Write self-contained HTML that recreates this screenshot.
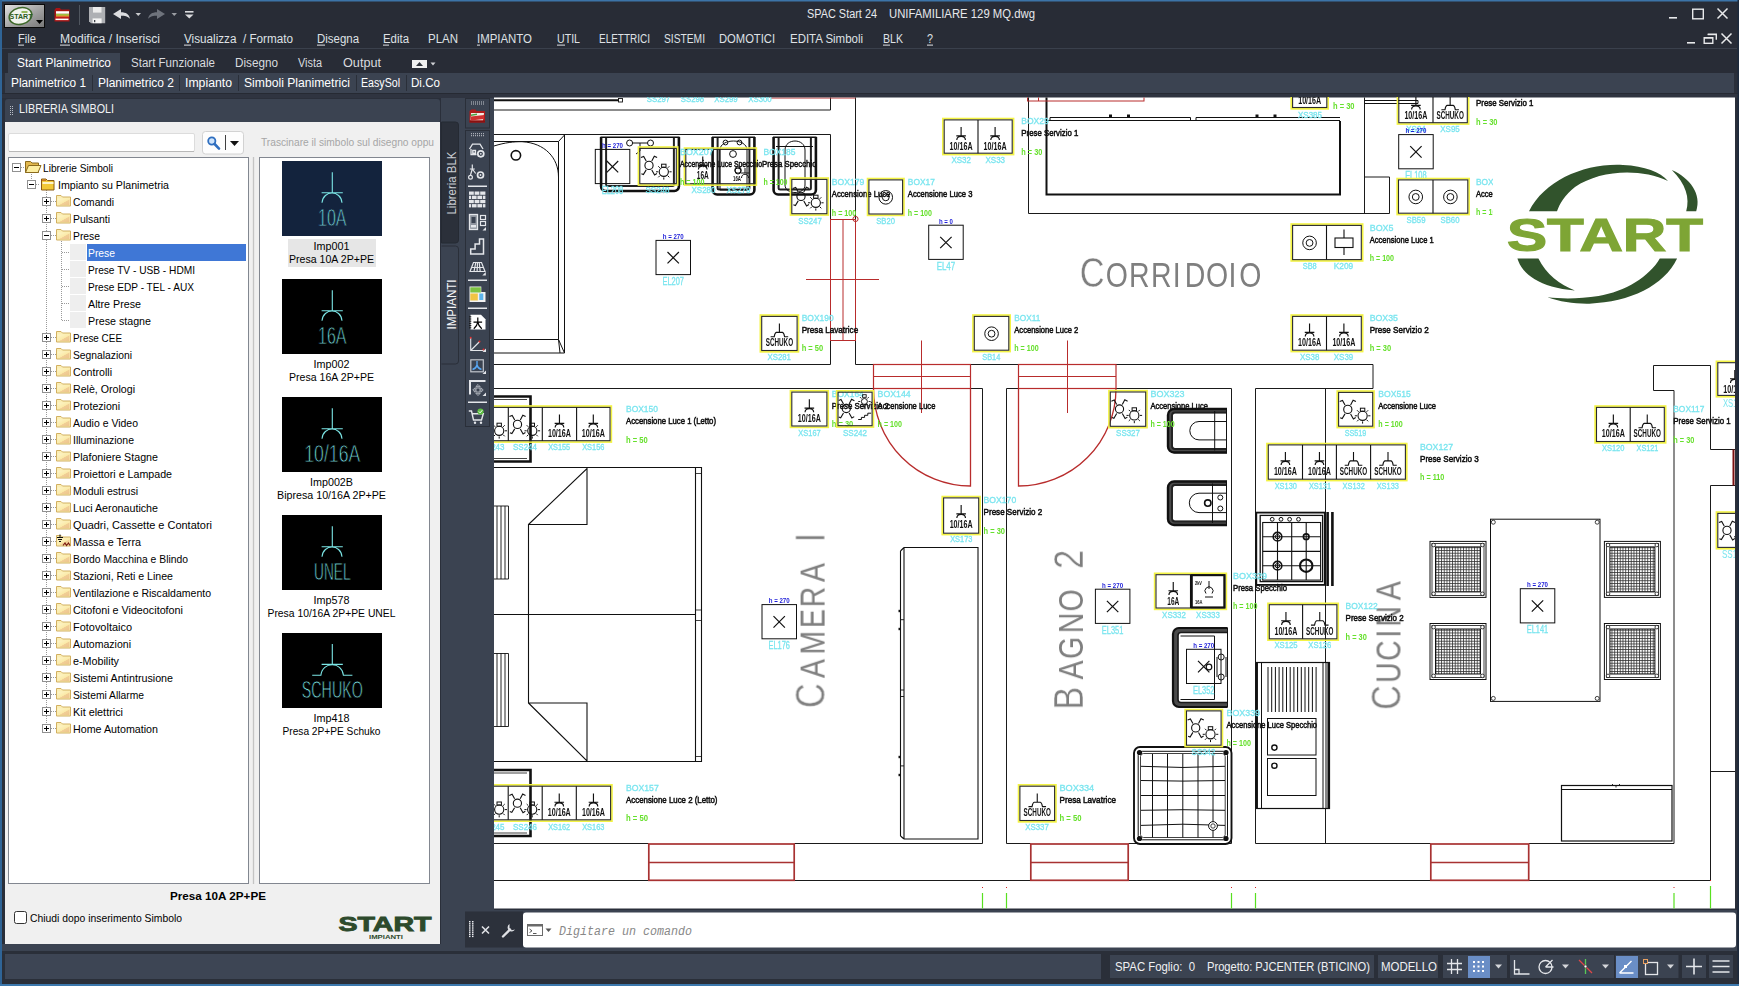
<!DOCTYPE html>
<html lang="it"><head><meta charset="utf-8"><title>SPAC Start 24 - UNIFAMILIARE 129 MQ.dwg</title>
<style>html,body{margin:0;padding:0;background:#222730;overflow:hidden}svg{display:block}text{white-space:pre}</style></head>
<body>
<svg font-family='"Liberation Sans", sans-serif' width="1739" height="986" viewBox="0 0 1739 986">
<rect x="0" y="0" width="1739" height="986" fill="#2a2f3a"/>
<rect x="0" y="0" width="1739" height="49" fill="#282c36"/>
<rect x="2" y="49" width="1736" height="24" fill="#282c36"/>
<line x1="2" y1="48.5" x2="1737" y2="48.5" stroke="#3a404c" stroke-width="1"/>
<rect x="8" y="53" width="112" height="20" fill="#3b4351"/>
<rect x="5" y="73" width="1729" height="20" fill="#3b4351"/>
<rect x="2" y="93" width="1736" height="1" fill="#262a33"/>
<rect x="2" y="94" width="1736" height="4" fill="#2f3440"/>
<rect x="0" y="0" width="1739" height="1.5" fill="#3c74a8"/>
<rect x="0" y="0" width="2" height="986" fill="#2f6496"/>
<rect x="1737.5" y="0" width="1.5" height="986" fill="#1d2a3c"/>
<rect x="0" y="984" width="1739" height="2" fill="#3c78ad"/>
<defs><linearGradient id="gApp" x1="0" y1="0" x2="1" y2="1"><stop offset="0" stop-color="#e2e2e2"/><stop offset="0.5" stop-color="#a8a8a8"/><stop offset="1" stop-color="#767676"/></linearGradient></defs>
<rect x="4.5" y="4.5" width="40" height="23" fill="url(#gApp)" stroke="#0a0a0a" stroke-width="1"/>
<ellipse cx="20.500" cy="16" rx="11.500" ry="8.200" fill="#f2f4ee" stroke="#3f6a2a" stroke-width="1.500" transform="rotate(-14 20.500 16)"/>
<g opacity="0.999"><text x="9.5" y="19.3" font-size="6.8" fill="#2c5a22" textLength="23" lengthAdjust="spacingAndGlyphs" font-weight="bold" font-family='"Liberation Sans", sans-serif'>START</text></g>
<rect x="21.5" y="11.2" width="6" height="1.6" fill="#7da838"/>
<path d="M36 20 h7 l-3.5 4z" fill="#000"/>
<path d="M54.500 10 l1.500 -2 h4 l1 1.500 h8.500 v12 h-15z" fill="#a81414"/>
<rect x="56" y="11.2" width="13" height="2.6" fill="#ffffff"/>
<rect x="56" y="13.8" width="13" height="2.2" fill="#9cc040"/>
<rect x="56" y="15.5" width="13" height="1.4" fill="#e88a30"/>
<rect x="55.5" y="16.8" width="13.5" height="2" fill="#c01c1c"/>
<rect x="55.5" y="18.6" width="13" height="1.5" fill="#ffffff"/>
<line x1="79.5" y1="5" x2="79.5" y2="25" stroke="#50565f" stroke-width="1"/>
<path d="M89 7 h16.200 v16.200 h-14.200 l-2 -2z" fill="#aeb0b4"/>
<rect x="93" y="7" width="8.5" height="5.6" fill="#ececec"/>
<rect x="92.6" y="18.4" width="9" height="4.8" fill="#f4f4f4"/>
<rect x="94" y="20" width="1.3" height="2.2" fill="#3a3e46"/>
<path d="M113 14 l8 -5 v3.2 c5 0 8 2 9 6.5 c-2.5 -2.5 -5 -3 -9 -3 v3.3z" fill="#dcdde0"/>
<path d="M135.5 13 h5.5 l-2.75 3z" fill="#c8cacd"/>
<path d="M165 14 l-8 -5 v3.2 c-5 0 -8 2 -9 6.5 c2.500 -2.5 5 -3 9 -3 v3.3z" fill="#6e737c"/>
<path d="M171.500 13 h5.5 l-2.75 3z" fill="#9a9da3"/>
<rect x="185" y="11" width="8.5" height="1.6" fill="#d8d9dc"/>
<path d="M185 14.5 h8.5 l-4.25 4z" fill="#d8d9dc"/>
<text x="807" y="18" font-size="12" fill="#e6e8ec" textLength="70" lengthAdjust="spacingAndGlyphs" font-family='"Liberation Sans", sans-serif'>SPAC Start 24</text>
<text x="889" y="18" font-size="12" fill="#e6e8ec" textLength="146" lengthAdjust="spacingAndGlyphs" font-family='"Liberation Sans", sans-serif'>UNIFAMILIARE 129 MQ.dwg</text>
<rect x="1669" y="17" width="8" height="1.6" fill="#e8e9eb"/>
<rect x="1692.7" y="9.2" width="10.6" height="9.6" fill="none" stroke="#e8e9eb" stroke-width="1.4"/>
<path d="M1717.500 8.5 l10 10 M1727.500 8.5 l-10 10" fill="none" stroke="#e8e9eb" stroke-width="1.5"/>
<rect x="1687" y="42" width="8" height="1.6" fill="#e8e9eb"/>
<path d="M1707.700 34.2 h8.6 v5.6" fill="none" stroke="#e8e9eb" stroke-width="1.4"/>
<rect x="1707.7" y="34" width="8.6" height="1.2" fill="#e8e9eb"/>
<rect x="1704.2" y="37.7" width="8.6" height="5.6" fill="#282c36" stroke="#e8e9eb" stroke-width="1.4"/>
<rect x="1704.2" y="37.4" width="8.6" height="1.2" fill="#e8e9eb"/>
<path d="M1721.500 33.5 l10 10 M1731.500 33.5 l-10 10" fill="none" stroke="#e8e9eb" stroke-width="1.5"/>
<text x="18" y="43" font-size="12" fill="#dfe1e5" textLength="18" lengthAdjust="spacingAndGlyphs" font-family='"Liberation Sans", sans-serif'>File</text>
<text x="60" y="43" font-size="12" fill="#dfe1e5" textLength="100" lengthAdjust="spacingAndGlyphs" font-family='"Liberation Sans", sans-serif'>Modifica / Inserisci</text>
<text x="184" y="43" font-size="12" fill="#dfe1e5" textLength="109" lengthAdjust="spacingAndGlyphs" font-family='"Liberation Sans", sans-serif'>Visualizza  / Formato</text>
<text x="317" y="43" font-size="12" fill="#dfe1e5" textLength="42" lengthAdjust="spacingAndGlyphs" font-family='"Liberation Sans", sans-serif'>Disegna</text>
<text x="383" y="43" font-size="12" fill="#dfe1e5" textLength="26" lengthAdjust="spacingAndGlyphs" font-family='"Liberation Sans", sans-serif'>Edita</text>
<text x="428" y="43" font-size="12" fill="#dfe1e5" textLength="30" lengthAdjust="spacingAndGlyphs" font-family='"Liberation Sans", sans-serif'>PLAN</text>
<text x="477" y="43" font-size="12" fill="#dfe1e5" textLength="55" lengthAdjust="spacingAndGlyphs" font-family='"Liberation Sans", sans-serif'>IMPIANTO</text>
<text x="557" y="43" font-size="12" fill="#dfe1e5" textLength="23" lengthAdjust="spacingAndGlyphs" font-family='"Liberation Sans", sans-serif'>UTIL</text>
<text x="599" y="43" font-size="12" fill="#dfe1e5" textLength="51" lengthAdjust="spacingAndGlyphs" font-family='"Liberation Sans", sans-serif'>ELETTRICI</text>
<text x="664" y="43" font-size="12" fill="#dfe1e5" textLength="41" lengthAdjust="spacingAndGlyphs" font-family='"Liberation Sans", sans-serif'>SISTEMI</text>
<text x="719" y="43" font-size="12" fill="#dfe1e5" textLength="56" lengthAdjust="spacingAndGlyphs" font-family='"Liberation Sans", sans-serif'>DOMOTICI</text>
<text x="790" y="43" font-size="12" fill="#dfe1e5" textLength="73" lengthAdjust="spacingAndGlyphs" font-family='"Liberation Sans", sans-serif'>EDITA Simboli</text>
<text x="883" y="43" font-size="12" fill="#dfe1e5" textLength="20" lengthAdjust="spacingAndGlyphs" font-family='"Liberation Sans", sans-serif'>BLK</text>
<text x="927" y="43" font-size="12" fill="#dfe1e5" textLength="6" lengthAdjust="spacingAndGlyphs" font-family='"Liberation Sans", sans-serif'>?</text>
<rect x="18" y="44.6" width="6" height="1" fill="#dfe1e5"/>
<rect x="60" y="44.6" width="10" height="1" fill="#dfe1e5"/>
<rect x="184" y="44.6" width="7" height="1" fill="#dfe1e5"/>
<rect x="317" y="44.6" width="8" height="1" fill="#dfe1e5"/>
<rect x="383" y="44.6" width="6" height="1" fill="#dfe1e5"/>
<rect x="477" y="44.6" width="3" height="1" fill="#dfe1e5"/>
<rect x="557" y="44.6" width="8" height="1" fill="#dfe1e5"/>
<rect x="883" y="44.6" width="7" height="1" fill="#dfe1e5"/>
<rect x="927" y="44.6" width="6" height="1" fill="#dfe1e5"/>
<text x="17" y="67" font-size="12" fill="#ffffff" textLength="94" lengthAdjust="spacingAndGlyphs" font-family='"Liberation Sans", sans-serif'>Start Planimetrico</text>
<text x="131" y="67" font-size="12" fill="#d9dbdf" textLength="84" lengthAdjust="spacingAndGlyphs" font-family='"Liberation Sans", sans-serif'>Start Funzionale</text>
<text x="235" y="67" font-size="12" fill="#d9dbdf" textLength="43" lengthAdjust="spacingAndGlyphs" font-family='"Liberation Sans", sans-serif'>Disegno</text>
<text x="298" y="67" font-size="12" fill="#d9dbdf" textLength="24" lengthAdjust="spacingAndGlyphs" font-family='"Liberation Sans", sans-serif'>Vista</text>
<text x="343" y="67" font-size="12" fill="#d9dbdf" textLength="38" lengthAdjust="spacingAndGlyphs" font-family='"Liberation Sans", sans-serif'>Output</text>
<rect x="412" y="60" width="15" height="8" fill="#f0f0f0"/>
<path d="M416 66 h7 l-3.5 -4z" fill="#30343c"/>
<path d="M430.500 62.5 h5 l-2.5 3z" fill="#d0d2d6"/>
<text x="11" y="87" font-size="12" fill="#ffffff" textLength="75" lengthAdjust="spacingAndGlyphs" font-family='"Liberation Sans", sans-serif'>Planimetrico 1</text>
<text x="98" y="87" font-size="12" fill="#ffffff" textLength="76" lengthAdjust="spacingAndGlyphs" font-family='"Liberation Sans", sans-serif'>Planimetrico 2</text>
<text x="185" y="87" font-size="12" fill="#ffffff" textLength="47" lengthAdjust="spacingAndGlyphs" font-family='"Liberation Sans", sans-serif'>Impianto</text>
<text x="244" y="87" font-size="12" fill="#ffffff" textLength="106" lengthAdjust="spacingAndGlyphs" font-family='"Liberation Sans", sans-serif'>Simboli Planimetrici</text>
<text x="361" y="87" font-size="12" fill="#ffffff" textLength="39" lengthAdjust="spacingAndGlyphs" font-family='"Liberation Sans", sans-serif'>EasySol</text>
<text x="411" y="87" font-size="12" fill="#ffffff" textLength="29" lengthAdjust="spacingAndGlyphs" font-family='"Liberation Sans", sans-serif'>Di.Co</text>
<line x1="92.5" y1="75" x2="92.5" y2="91" stroke="#2a2f39" stroke-width="1"/>
<line x1="179.5" y1="75" x2="179.5" y2="91" stroke="#2a2f39" stroke-width="1"/>
<line x1="238.5" y1="75" x2="238.5" y2="91" stroke="#2a2f39" stroke-width="1"/>
<line x1="356.5" y1="75" x2="356.5" y2="91" stroke="#2a2f39" stroke-width="1"/>
<line x1="406.5" y1="75" x2="406.5" y2="91" stroke="#2a2f39" stroke-width="1"/>
<defs><linearGradient id="gFold" x1="0" y1="0" x2="1" y2="1"><stop offset="0" stop-color="#fdf6cc"/><stop offset="0.55" stop-color="#fbeaa8"/><stop offset="0.6" stop-color="#f1cf96"/><stop offset="1" stop-color="#eec48e"/></linearGradient></defs>
<rect x="5" y="99" width="435" height="24" fill="#3b4351" rx="3"/>
<rect x="10" y="106" width="1" height="1" fill="#b9bdc5"/>
<rect x="12" y="106" width="1" height="1" fill="#b9bdc5"/>
<rect x="10" y="108" width="1" height="1" fill="#b9bdc5"/>
<rect x="12" y="108" width="1" height="1" fill="#b9bdc5"/>
<rect x="10" y="110" width="1" height="1" fill="#b9bdc5"/>
<rect x="12" y="110" width="1" height="1" fill="#b9bdc5"/>
<rect x="10" y="112" width="1" height="1" fill="#b9bdc5"/>
<rect x="12" y="112" width="1" height="1" fill="#b9bdc5"/>
<rect x="10" y="114" width="1" height="1" fill="#b9bdc5"/>
<rect x="12" y="114" width="1" height="1" fill="#b9bdc5"/>
<text x="19" y="113.2" font-size="12.3" fill="#f2f3f5" textLength="95" lengthAdjust="spacingAndGlyphs" font-family='"Liberation Sans", sans-serif'>LIBRERIA SIMBOLI</text>
<rect x="5" y="122" width="435" height="822" fill="#f0f0f0"/>
<rect x="8.5" y="133.5" width="186" height="18" fill="#ffffff" stroke="#dcdcdc" stroke-width="1" rx="1.5"/>
<line x1="9" y1="151.5" x2="194" y2="151.5" stroke="#b8b8b8" stroke-width="1"/>
<rect x="202.5" y="131.5" width="41" height="22.5" fill="#fdfdfd" stroke="#d2d2d2" stroke-width="1" rx="3"/>
<circle cx="211.8" cy="141" r="3.6" fill="#cfe4fb" stroke="#2f6fc0" stroke-width="1.8"/>
<line x1="214.6" y1="144" x2="219" y2="148.6" stroke="#2f6fc0" stroke-width="2.6" stroke-linecap="round"/>
<line x1="225.5" y1="135" x2="225.5" y2="150" stroke="#404040" stroke-width="1"/>
<path d="M230 141 h9 l-4.500 5z" fill="#111"/>
<text x="261" y="146.4" font-size="11" fill="#a6a6a6" textLength="173" lengthAdjust="spacingAndGlyphs" font-family='"Liberation Sans", "DejaVu Sans", sans-serif'>Trascinare il simbolo sul disegno oppu</text>
<rect x="8.5" y="157.5" width="240" height="726" fill="#ffffff" stroke="#828790" stroke-width="1"/>
<rect x="252.5" y="157" width="2" height="727" fill="#e2e2e2"/>
<line x1="253.5" y1="157" x2="253.5" y2="884" stroke="#c4c4c4" stroke-width="1"/>
<rect x="259.5" y="157.5" width="170" height="726" fill="#ffffff" stroke="#828790" stroke-width="1"/>
<line x1="31.5" y1="174" x2="31.5" y2="181" stroke="#9a9a9a" stroke-width="1" stroke-dasharray="1 1"/>
<line x1="21" y1="167.5" x2="25" y2="167.5" stroke="#9a9a9a" stroke-width="1" stroke-dasharray="1 1"/>
<line x1="36" y1="184.5" x2="40" y2="184.5" stroke="#9a9a9a" stroke-width="1" stroke-dasharray="1 1"/>
<line x1="46.5" y1="190" x2="46.5" y2="729" stroke="#9a9a9a" stroke-width="1" stroke-dasharray="1 1"/>
<line x1="61.5" y1="241" x2="61.5" y2="321" stroke="#9a9a9a" stroke-width="1" stroke-dasharray="1 1"/>
<rect x="12.5" y="163.5" width="8" height="8" fill="#ffffff" stroke="#919191" stroke-width="1"/>
<rect x="14" y="167" width="5" height="1" fill="#000"/>
<path d="M25.5 161.5 h5 l1.500 1.500 h6.500 v9.500 h-13z" fill="#e2b84e" stroke="#8a6a1c" stroke-width="1"/>
<path d="M28.5 165.5 h12.500 l-3 7 h-12.500z" fill="#fdeea0" stroke="#8a6a1c" stroke-width="1"/>
<text x="43" y="172" font-size="11" fill="#000000" textLength="70" lengthAdjust="spacingAndGlyphs" font-family='"Liberation Sans", "DejaVu Sans", sans-serif'>Librerie Simboli</text>
<rect x="27.5" y="180.5" width="8" height="8" fill="#ffffff" stroke="#919191" stroke-width="1"/>
<rect x="29" y="184" width="5" height="1" fill="#000"/>
<path d="M41.500 179 h4.500 l1.500 1.500 h6.500 v9.500 h-12.500z" fill="#f2c838" stroke="#8a5a14" stroke-width="1"/>
<rect x="42.5" y="182" width="11" height="2" fill="#fdf4c8"/>
<rect x="42" y="179.5" width="4" height="1.5" fill="#c87820"/>
<text x="58" y="189" font-size="11" fill="#000000" textLength="111" lengthAdjust="spacingAndGlyphs" font-family='"Liberation Sans", "DejaVu Sans", sans-serif'>Impianto su Planimetria</text>
<line x1="51" y1="201.5" x2="56" y2="201.5" stroke="#9a9a9a" stroke-width="1" stroke-dasharray="1 1"/>
<rect x="42.5" y="197.5" width="8" height="8" fill="#ffffff" stroke="#919191" stroke-width="1"/>
<rect x="44" y="201" width="5" height="1" fill="#000"/>
<rect x="46" y="199" width="1" height="5" fill="#000"/>
<path d="M56.5 195.5 h4.500 l1.500 1.500 h8 v9 h-14z" fill="#fbeeb4" stroke="#d2b060" stroke-width="1"/>
<path d="M57.5 198.5 h12 v6.500 h-12z" fill="url(#gFold)"/>
<text x="73" y="206" font-size="11" fill="#000000" textLength="41" lengthAdjust="spacingAndGlyphs" font-family='"Liberation Sans", "DejaVu Sans", sans-serif'>Comandi</text>
<line x1="51" y1="218.5" x2="56" y2="218.5" stroke="#9a9a9a" stroke-width="1" stroke-dasharray="1 1"/>
<rect x="42.5" y="214.5" width="8" height="8" fill="#ffffff" stroke="#919191" stroke-width="1"/>
<rect x="44" y="218" width="5" height="1" fill="#000"/>
<rect x="46" y="216" width="1" height="5" fill="#000"/>
<path d="M56.5 212.5 h4.500 l1.500 1.500 h8 v9 h-14z" fill="#fbeeb4" stroke="#d2b060" stroke-width="1"/>
<path d="M57.5 215.5 h12 v6.500 h-12z" fill="url(#gFold)"/>
<text x="73" y="223" font-size="11" fill="#000000" textLength="37" lengthAdjust="spacingAndGlyphs" font-family='"Liberation Sans", "DejaVu Sans", sans-serif'>Pulsanti</text>
<line x1="51" y1="235.5" x2="56" y2="235.5" stroke="#9a9a9a" stroke-width="1" stroke-dasharray="1 1"/>
<rect x="42.5" y="231.5" width="8" height="8" fill="#ffffff" stroke="#919191" stroke-width="1"/>
<rect x="44" y="235" width="5" height="1" fill="#000"/>
<path d="M56.5 229.5 h4.500 l1.500 1.500 h8 v9 h-14z" fill="#fbeeb4" stroke="#d2b060" stroke-width="1"/>
<path d="M57.5 232.5 h12 v6.500 h-12z" fill="url(#gFold)"/>
<text x="73" y="240" font-size="11" fill="#000000" textLength="27" lengthAdjust="spacingAndGlyphs" font-family='"Liberation Sans", "DejaVu Sans", sans-serif'>Prese</text>
<line x1="62" y1="252.5" x2="69" y2="252.5" stroke="#9a9a9a" stroke-width="1" stroke-dasharray="1 1"/>
<rect x="70" y="244" width="16" height="16" fill="#eeeeee"/>
<rect x="87" y="244" width="159" height="17" fill="#3f77d6"/>
<text x="88" y="257" font-size="11" fill="#ffffff" textLength="27" lengthAdjust="spacingAndGlyphs" font-family='"Liberation Sans", "DejaVu Sans", sans-serif'>Prese</text>
<line x1="62" y1="269.5" x2="69" y2="269.5" stroke="#9a9a9a" stroke-width="1" stroke-dasharray="1 1"/>
<rect x="70" y="261" width="16" height="16" fill="#eeeeee"/>
<text x="88" y="274" font-size="11" fill="#000000" textLength="107" lengthAdjust="spacingAndGlyphs" font-family='"Liberation Sans", "DejaVu Sans", sans-serif'>Prese TV - USB - HDMI</text>
<line x1="62" y1="286.5" x2="69" y2="286.5" stroke="#9a9a9a" stroke-width="1" stroke-dasharray="1 1"/>
<rect x="70" y="278" width="16" height="16" fill="#eeeeee"/>
<text x="88" y="291" font-size="11" fill="#000000" textLength="106" lengthAdjust="spacingAndGlyphs" font-family='"Liberation Sans", "DejaVu Sans", sans-serif'>Prese EDP - TEL - AUX</text>
<line x1="62" y1="303.5" x2="69" y2="303.5" stroke="#9a9a9a" stroke-width="1" stroke-dasharray="1 1"/>
<rect x="70" y="295" width="16" height="16" fill="#eeeeee"/>
<text x="88" y="308" font-size="11" fill="#000000" textLength="53" lengthAdjust="spacingAndGlyphs" font-family='"Liberation Sans", "DejaVu Sans", sans-serif'>Altre Prese</text>
<line x1="62" y1="320.5" x2="69" y2="320.5" stroke="#9a9a9a" stroke-width="1" stroke-dasharray="1 1"/>
<rect x="70" y="312" width="16" height="16" fill="#eeeeee"/>
<text x="88" y="325" font-size="11" fill="#000000" textLength="63" lengthAdjust="spacingAndGlyphs" font-family='"Liberation Sans", "DejaVu Sans", sans-serif'>Prese stagne</text>
<line x1="51" y1="337.5" x2="56" y2="337.5" stroke="#9a9a9a" stroke-width="1" stroke-dasharray="1 1"/>
<rect x="42.5" y="333.5" width="8" height="8" fill="#ffffff" stroke="#919191" stroke-width="1"/>
<rect x="44" y="337" width="5" height="1" fill="#000"/>
<rect x="46" y="335" width="1" height="5" fill="#000"/>
<path d="M56.5 331.5 h4.500 l1.500 1.500 h8 v9 h-14z" fill="#fbeeb4" stroke="#d2b060" stroke-width="1"/>
<path d="M57.5 334.5 h12 v6.500 h-12z" fill="url(#gFold)"/>
<text x="73" y="342" font-size="11" fill="#000000" textLength="49" lengthAdjust="spacingAndGlyphs" font-family='"Liberation Sans", "DejaVu Sans", sans-serif'>Prese CEE</text>
<line x1="51" y1="354.5" x2="56" y2="354.5" stroke="#9a9a9a" stroke-width="1" stroke-dasharray="1 1"/>
<rect x="42.5" y="350.5" width="8" height="8" fill="#ffffff" stroke="#919191" stroke-width="1"/>
<rect x="44" y="354" width="5" height="1" fill="#000"/>
<rect x="46" y="352" width="1" height="5" fill="#000"/>
<path d="M56.5 348.5 h4.500 l1.500 1.500 h8 v9 h-14z" fill="#fbeeb4" stroke="#d2b060" stroke-width="1"/>
<path d="M57.5 351.5 h12 v6.500 h-12z" fill="url(#gFold)"/>
<text x="73" y="359" font-size="11" fill="#000000" textLength="59" lengthAdjust="spacingAndGlyphs" font-family='"Liberation Sans", "DejaVu Sans", sans-serif'>Segnalazioni</text>
<line x1="51" y1="371.5" x2="56" y2="371.5" stroke="#9a9a9a" stroke-width="1" stroke-dasharray="1 1"/>
<rect x="42.5" y="367.5" width="8" height="8" fill="#ffffff" stroke="#919191" stroke-width="1"/>
<rect x="44" y="371" width="5" height="1" fill="#000"/>
<rect x="46" y="369" width="1" height="5" fill="#000"/>
<path d="M56.5 365.5 h4.500 l1.500 1.500 h8 v9 h-14z" fill="#fbeeb4" stroke="#d2b060" stroke-width="1"/>
<path d="M57.5 368.5 h12 v6.500 h-12z" fill="url(#gFold)"/>
<text x="73" y="376" font-size="11" fill="#000000" textLength="39" lengthAdjust="spacingAndGlyphs" font-family='"Liberation Sans", "DejaVu Sans", sans-serif'>Controlli</text>
<line x1="51" y1="388.5" x2="56" y2="388.5" stroke="#9a9a9a" stroke-width="1" stroke-dasharray="1 1"/>
<rect x="42.5" y="384.5" width="8" height="8" fill="#ffffff" stroke="#919191" stroke-width="1"/>
<rect x="44" y="388" width="5" height="1" fill="#000"/>
<rect x="46" y="386" width="1" height="5" fill="#000"/>
<path d="M56.5 382.5 h4.500 l1.500 1.500 h8 v9 h-14z" fill="#fbeeb4" stroke="#d2b060" stroke-width="1"/>
<path d="M57.5 385.5 h12 v6.500 h-12z" fill="url(#gFold)"/>
<text x="73" y="393" font-size="11" fill="#000000" textLength="62" lengthAdjust="spacingAndGlyphs" font-family='"Liberation Sans", "DejaVu Sans", sans-serif'>Relè, Orologi</text>
<line x1="51" y1="405.5" x2="56" y2="405.5" stroke="#9a9a9a" stroke-width="1" stroke-dasharray="1 1"/>
<rect x="42.5" y="401.5" width="8" height="8" fill="#ffffff" stroke="#919191" stroke-width="1"/>
<rect x="44" y="405" width="5" height="1" fill="#000"/>
<rect x="46" y="403" width="1" height="5" fill="#000"/>
<path d="M56.5 399.5 h4.500 l1.500 1.500 h8 v9 h-14z" fill="#fbeeb4" stroke="#d2b060" stroke-width="1"/>
<path d="M57.5 402.5 h12 v6.500 h-12z" fill="url(#gFold)"/>
<text x="73" y="410" font-size="11" fill="#000000" textLength="47" lengthAdjust="spacingAndGlyphs" font-family='"Liberation Sans", "DejaVu Sans", sans-serif'>Protezioni</text>
<line x1="51" y1="422.5" x2="56" y2="422.5" stroke="#9a9a9a" stroke-width="1" stroke-dasharray="1 1"/>
<rect x="42.5" y="418.5" width="8" height="8" fill="#ffffff" stroke="#919191" stroke-width="1"/>
<rect x="44" y="422" width="5" height="1" fill="#000"/>
<rect x="46" y="420" width="1" height="5" fill="#000"/>
<path d="M56.5 416.5 h4.500 l1.500 1.500 h8 v9 h-14z" fill="#fbeeb4" stroke="#d2b060" stroke-width="1"/>
<path d="M57.5 419.5 h12 v6.500 h-12z" fill="url(#gFold)"/>
<text x="73" y="427" font-size="11" fill="#000000" textLength="65" lengthAdjust="spacingAndGlyphs" font-family='"Liberation Sans", "DejaVu Sans", sans-serif'>Audio e Video</text>
<line x1="51" y1="439.5" x2="56" y2="439.5" stroke="#9a9a9a" stroke-width="1" stroke-dasharray="1 1"/>
<rect x="42.5" y="435.5" width="8" height="8" fill="#ffffff" stroke="#919191" stroke-width="1"/>
<rect x="44" y="439" width="5" height="1" fill="#000"/>
<rect x="46" y="437" width="1" height="5" fill="#000"/>
<path d="M56.5 433.5 h4.500 l1.500 1.500 h8 v9 h-14z" fill="#fbeeb4" stroke="#d2b060" stroke-width="1"/>
<path d="M57.5 436.5 h12 v6.500 h-12z" fill="url(#gFold)"/>
<text x="73" y="444" font-size="11" fill="#000000" textLength="61" lengthAdjust="spacingAndGlyphs" font-family='"Liberation Sans", "DejaVu Sans", sans-serif'>Illuminazione</text>
<line x1="51" y1="456.5" x2="56" y2="456.5" stroke="#9a9a9a" stroke-width="1" stroke-dasharray="1 1"/>
<rect x="42.5" y="452.5" width="8" height="8" fill="#ffffff" stroke="#919191" stroke-width="1"/>
<rect x="44" y="456" width="5" height="1" fill="#000"/>
<rect x="46" y="454" width="1" height="5" fill="#000"/>
<path d="M56.5 450.5 h4.500 l1.500 1.500 h8 v9 h-14z" fill="#fbeeb4" stroke="#d2b060" stroke-width="1"/>
<path d="M57.5 453.5 h12 v6.500 h-12z" fill="url(#gFold)"/>
<text x="73" y="461" font-size="11" fill="#000000" textLength="85" lengthAdjust="spacingAndGlyphs" font-family='"Liberation Sans", "DejaVu Sans", sans-serif'>Plafoniere Stagne</text>
<line x1="51" y1="473.5" x2="56" y2="473.5" stroke="#9a9a9a" stroke-width="1" stroke-dasharray="1 1"/>
<rect x="42.5" y="469.5" width="8" height="8" fill="#ffffff" stroke="#919191" stroke-width="1"/>
<rect x="44" y="473" width="5" height="1" fill="#000"/>
<rect x="46" y="471" width="1" height="5" fill="#000"/>
<path d="M56.5 467.5 h4.500 l1.500 1.500 h8 v9 h-14z" fill="#fbeeb4" stroke="#d2b060" stroke-width="1"/>
<path d="M57.5 470.5 h12 v6.500 h-12z" fill="url(#gFold)"/>
<text x="73" y="478" font-size="11" fill="#000000" textLength="99" lengthAdjust="spacingAndGlyphs" font-family='"Liberation Sans", "DejaVu Sans", sans-serif'>Proiettori e Lampade</text>
<line x1="51" y1="490.5" x2="56" y2="490.5" stroke="#9a9a9a" stroke-width="1" stroke-dasharray="1 1"/>
<rect x="42.5" y="486.5" width="8" height="8" fill="#ffffff" stroke="#919191" stroke-width="1"/>
<rect x="44" y="490" width="5" height="1" fill="#000"/>
<rect x="46" y="488" width="1" height="5" fill="#000"/>
<path d="M56.5 484.5 h4.500 l1.500 1.500 h8 v9 h-14z" fill="#fbeeb4" stroke="#d2b060" stroke-width="1"/>
<path d="M57.5 487.5 h12 v6.500 h-12z" fill="url(#gFold)"/>
<text x="73" y="495" font-size="11" fill="#000000" textLength="65" lengthAdjust="spacingAndGlyphs" font-family='"Liberation Sans", "DejaVu Sans", sans-serif'>Moduli estrusi</text>
<line x1="51" y1="507.5" x2="56" y2="507.5" stroke="#9a9a9a" stroke-width="1" stroke-dasharray="1 1"/>
<rect x="42.5" y="503.5" width="8" height="8" fill="#ffffff" stroke="#919191" stroke-width="1"/>
<rect x="44" y="507" width="5" height="1" fill="#000"/>
<rect x="46" y="505" width="1" height="5" fill="#000"/>
<path d="M56.5 501.5 h4.500 l1.500 1.500 h8 v9 h-14z" fill="#fbeeb4" stroke="#d2b060" stroke-width="1"/>
<path d="M57.5 504.5 h12 v6.500 h-12z" fill="url(#gFold)"/>
<text x="73" y="512" font-size="11" fill="#000000" textLength="85" lengthAdjust="spacingAndGlyphs" font-family='"Liberation Sans", "DejaVu Sans", sans-serif'>Luci Aeronautiche</text>
<line x1="51" y1="524.5" x2="56" y2="524.5" stroke="#9a9a9a" stroke-width="1" stroke-dasharray="1 1"/>
<rect x="42.5" y="520.5" width="8" height="8" fill="#ffffff" stroke="#919191" stroke-width="1"/>
<rect x="44" y="524" width="5" height="1" fill="#000"/>
<rect x="46" y="522" width="1" height="5" fill="#000"/>
<path d="M56.5 518.5 h4.500 l1.500 1.500 h8 v9 h-14z" fill="#fbeeb4" stroke="#d2b060" stroke-width="1"/>
<path d="M57.5 521.5 h12 v6.500 h-12z" fill="url(#gFold)"/>
<text x="73" y="529" font-size="11" fill="#000000" textLength="139" lengthAdjust="spacingAndGlyphs" font-family='"Liberation Sans", "DejaVu Sans", sans-serif'>Quadri, Cassette e Contatori</text>
<line x1="51" y1="541.5" x2="56" y2="541.5" stroke="#9a9a9a" stroke-width="1" stroke-dasharray="1 1"/>
<rect x="42.5" y="537.5" width="8" height="8" fill="#ffffff" stroke="#919191" stroke-width="1"/>
<rect x="44" y="541" width="5" height="1" fill="#000"/>
<rect x="46" y="539" width="1" height="5" fill="#000"/>
<path d="M56.5 535.5 h4.500 l1.500 1.500 h8 v9 h-14z" fill="#fbeeb4" stroke="#d2b060" stroke-width="1"/>
<path d="M57.5 538.5 h12 v6.500 h-12z" fill="url(#gFold)"/>
<path d="M57 537.5 h6 M58 539.5 h4 M59 541.5 h2 M60 537.5 v-3" fill="none" stroke="#111" stroke-width="1"/>
<path d="M63 545.5 l2 -2.500 l1.500 2.500 l2 -2.500 l1.500 2.500" fill="none" stroke="#7a1a10" stroke-width="1.1"/>
<text x="73" y="546" font-size="11" fill="#000000" textLength="68" lengthAdjust="spacingAndGlyphs" font-family='"Liberation Sans", "DejaVu Sans", sans-serif'>Massa e Terra</text>
<line x1="51" y1="558.5" x2="56" y2="558.5" stroke="#9a9a9a" stroke-width="1" stroke-dasharray="1 1"/>
<rect x="42.5" y="554.5" width="8" height="8" fill="#ffffff" stroke="#919191" stroke-width="1"/>
<rect x="44" y="558" width="5" height="1" fill="#000"/>
<rect x="46" y="556" width="1" height="5" fill="#000"/>
<path d="M56.5 552.5 h4.500 l1.500 1.500 h8 v9 h-14z" fill="#fbeeb4" stroke="#d2b060" stroke-width="1"/>
<path d="M57.5 555.5 h12 v6.500 h-12z" fill="url(#gFold)"/>
<text x="73" y="563" font-size="11" fill="#000000" textLength="115" lengthAdjust="spacingAndGlyphs" font-family='"Liberation Sans", "DejaVu Sans", sans-serif'>Bordo Macchina e Blindo</text>
<line x1="51" y1="575.5" x2="56" y2="575.5" stroke="#9a9a9a" stroke-width="1" stroke-dasharray="1 1"/>
<rect x="42.5" y="571.5" width="8" height="8" fill="#ffffff" stroke="#919191" stroke-width="1"/>
<rect x="44" y="575" width="5" height="1" fill="#000"/>
<rect x="46" y="573" width="1" height="5" fill="#000"/>
<path d="M56.5 569.5 h4.500 l1.500 1.500 h8 v9 h-14z" fill="#fbeeb4" stroke="#d2b060" stroke-width="1"/>
<path d="M57.5 572.5 h12 v6.500 h-12z" fill="url(#gFold)"/>
<text x="73" y="580" font-size="11" fill="#000000" textLength="100" lengthAdjust="spacingAndGlyphs" font-family='"Liberation Sans", "DejaVu Sans", sans-serif'>Stazioni, Reti e Linee</text>
<line x1="51" y1="592.5" x2="56" y2="592.5" stroke="#9a9a9a" stroke-width="1" stroke-dasharray="1 1"/>
<rect x="42.5" y="588.5" width="8" height="8" fill="#ffffff" stroke="#919191" stroke-width="1"/>
<rect x="44" y="592" width="5" height="1" fill="#000"/>
<rect x="46" y="590" width="1" height="5" fill="#000"/>
<path d="M56.5 586.5 h4.500 l1.500 1.500 h8 v9 h-14z" fill="#fbeeb4" stroke="#d2b060" stroke-width="1"/>
<path d="M57.5 589.5 h12 v6.500 h-12z" fill="url(#gFold)"/>
<text x="73" y="597" font-size="11" fill="#000000" textLength="138" lengthAdjust="spacingAndGlyphs" font-family='"Liberation Sans", "DejaVu Sans", sans-serif'>Ventilazione e Riscaldamento</text>
<line x1="51" y1="609.5" x2="56" y2="609.5" stroke="#9a9a9a" stroke-width="1" stroke-dasharray="1 1"/>
<rect x="42.5" y="605.5" width="8" height="8" fill="#ffffff" stroke="#919191" stroke-width="1"/>
<rect x="44" y="609" width="5" height="1" fill="#000"/>
<rect x="46" y="607" width="1" height="5" fill="#000"/>
<path d="M56.5 603.5 h4.500 l1.500 1.500 h8 v9 h-14z" fill="#fbeeb4" stroke="#d2b060" stroke-width="1"/>
<path d="M57.5 606.5 h12 v6.500 h-12z" fill="url(#gFold)"/>
<text x="73" y="614" font-size="11" fill="#000000" textLength="110" lengthAdjust="spacingAndGlyphs" font-family='"Liberation Sans", "DejaVu Sans", sans-serif'>Citofoni e Videocitofoni</text>
<line x1="51" y1="626.5" x2="56" y2="626.5" stroke="#9a9a9a" stroke-width="1" stroke-dasharray="1 1"/>
<rect x="42.5" y="622.5" width="8" height="8" fill="#ffffff" stroke="#919191" stroke-width="1"/>
<rect x="44" y="626" width="5" height="1" fill="#000"/>
<rect x="46" y="624" width="1" height="5" fill="#000"/>
<path d="M56.5 620.5 h4.500 l1.500 1.500 h8 v9 h-14z" fill="#fbeeb4" stroke="#d2b060" stroke-width="1"/>
<path d="M57.5 623.5 h12 v6.500 h-12z" fill="url(#gFold)"/>
<text x="73" y="631" font-size="11" fill="#000000" textLength="59" lengthAdjust="spacingAndGlyphs" font-family='"Liberation Sans", "DejaVu Sans", sans-serif'>Fotovoltaico</text>
<line x1="51" y1="643.5" x2="56" y2="643.5" stroke="#9a9a9a" stroke-width="1" stroke-dasharray="1 1"/>
<rect x="42.5" y="639.5" width="8" height="8" fill="#ffffff" stroke="#919191" stroke-width="1"/>
<rect x="44" y="643" width="5" height="1" fill="#000"/>
<rect x="46" y="641" width="1" height="5" fill="#000"/>
<path d="M56.5 637.5 h4.500 l1.500 1.500 h8 v9 h-14z" fill="#fbeeb4" stroke="#d2b060" stroke-width="1"/>
<path d="M57.5 640.5 h12 v6.500 h-12z" fill="url(#gFold)"/>
<text x="73" y="648" font-size="11" fill="#000000" textLength="58" lengthAdjust="spacingAndGlyphs" font-family='"Liberation Sans", "DejaVu Sans", sans-serif'>Automazioni</text>
<line x1="51" y1="660.5" x2="56" y2="660.5" stroke="#9a9a9a" stroke-width="1" stroke-dasharray="1 1"/>
<rect x="42.5" y="656.5" width="8" height="8" fill="#ffffff" stroke="#919191" stroke-width="1"/>
<rect x="44" y="660" width="5" height="1" fill="#000"/>
<rect x="46" y="658" width="1" height="5" fill="#000"/>
<path d="M56.5 654.5 h4.500 l1.500 1.500 h8 v9 h-14z" fill="#fbeeb4" stroke="#d2b060" stroke-width="1"/>
<path d="M57.5 657.5 h12 v6.500 h-12z" fill="url(#gFold)"/>
<text x="73" y="665" font-size="11" fill="#000000" textLength="46" lengthAdjust="spacingAndGlyphs" font-family='"Liberation Sans", "DejaVu Sans", sans-serif'>e-Mobility</text>
<line x1="51" y1="677.5" x2="56" y2="677.5" stroke="#9a9a9a" stroke-width="1" stroke-dasharray="1 1"/>
<rect x="42.5" y="673.5" width="8" height="8" fill="#ffffff" stroke="#919191" stroke-width="1"/>
<rect x="44" y="677" width="5" height="1" fill="#000"/>
<rect x="46" y="675" width="1" height="5" fill="#000"/>
<path d="M56.5 671.5 h4.500 l1.500 1.500 h8 v9 h-14z" fill="#fbeeb4" stroke="#d2b060" stroke-width="1"/>
<path d="M57.5 674.5 h12 v6.500 h-12z" fill="url(#gFold)"/>
<text x="73" y="682" font-size="11" fill="#000000" textLength="100" lengthAdjust="spacingAndGlyphs" font-family='"Liberation Sans", "DejaVu Sans", sans-serif'>Sistemi Antintrusione</text>
<line x1="51" y1="694.5" x2="56" y2="694.5" stroke="#9a9a9a" stroke-width="1" stroke-dasharray="1 1"/>
<rect x="42.5" y="690.5" width="8" height="8" fill="#ffffff" stroke="#919191" stroke-width="1"/>
<rect x="44" y="694" width="5" height="1" fill="#000"/>
<rect x="46" y="692" width="1" height="5" fill="#000"/>
<path d="M56.5 688.5 h4.500 l1.500 1.500 h8 v9 h-14z" fill="#fbeeb4" stroke="#d2b060" stroke-width="1"/>
<path d="M57.5 691.5 h12 v6.500 h-12z" fill="url(#gFold)"/>
<text x="73" y="699" font-size="11" fill="#000000" textLength="71" lengthAdjust="spacingAndGlyphs" font-family='"Liberation Sans", "DejaVu Sans", sans-serif'>Sistemi Allarme</text>
<line x1="51" y1="711.5" x2="56" y2="711.5" stroke="#9a9a9a" stroke-width="1" stroke-dasharray="1 1"/>
<rect x="42.5" y="707.5" width="8" height="8" fill="#ffffff" stroke="#919191" stroke-width="1"/>
<rect x="44" y="711" width="5" height="1" fill="#000"/>
<rect x="46" y="709" width="1" height="5" fill="#000"/>
<path d="M56.5 705.5 h4.500 l1.500 1.500 h8 v9 h-14z" fill="#fbeeb4" stroke="#d2b060" stroke-width="1"/>
<path d="M57.5 708.5 h12 v6.500 h-12z" fill="url(#gFold)"/>
<text x="73" y="716" font-size="11" fill="#000000" textLength="50" lengthAdjust="spacingAndGlyphs" font-family='"Liberation Sans", "DejaVu Sans", sans-serif'>Kit elettrici</text>
<line x1="51" y1="728.5" x2="56" y2="728.5" stroke="#9a9a9a" stroke-width="1" stroke-dasharray="1 1"/>
<rect x="42.5" y="724.5" width="8" height="8" fill="#ffffff" stroke="#919191" stroke-width="1"/>
<rect x="44" y="728" width="5" height="1" fill="#000"/>
<rect x="46" y="726" width="1" height="5" fill="#000"/>
<path d="M56.5 722.5 h4.500 l1.500 1.500 h8 v9 h-14z" fill="#fbeeb4" stroke="#d2b060" stroke-width="1"/>
<path d="M57.5 725.5 h12 v6.500 h-12z" fill="url(#gFold)"/>
<text x="73" y="733" font-size="11" fill="#000000" textLength="85" lengthAdjust="spacingAndGlyphs" font-family='"Liberation Sans", "DejaVu Sans", sans-serif'>Home Automation</text>
<rect x="282" y="161" width="100" height="75" fill="#13233d"/>
<path d="M332.300 172.2 v20.600 M321.600 192.8 h21.200 M322 202.8 c1 -13 19 -13 20 0" fill="none" stroke="#7ce6e6" stroke-width="1.1"/>
<text x="332.3" y="226" font-size="24.7" fill="#7ce6e6" textLength="28.5" lengthAdjust="spacingAndGlyphs" text-anchor="middle" font-family='"Liberation Sans", sans-serif' stroke="#13233d" stroke-width="0.9">10A</text>
<rect x="288" y="239" width="88" height="28" fill="#e6e6e6"/>
<text x="331.5" y="249.6" font-size="11" fill="#000" textLength="36" lengthAdjust="spacingAndGlyphs" text-anchor="middle" font-family='"Liberation Sans", "DejaVu Sans", sans-serif'>Imp001</text>
<text x="331.5" y="262.6" font-size="11" fill="#000" textLength="85" lengthAdjust="spacingAndGlyphs" text-anchor="middle" font-family='"Liberation Sans", "DejaVu Sans", sans-serif'>Presa 10A 2P+PE</text>
<rect x="282" y="279" width="100" height="75" fill="#000000"/>
<path d="M332.300 290.2 v20.600 M321.600 310.8 h21.200 M322 320.8 c1 -13 19 -13 20 0" fill="none" stroke="#7ce6e6" stroke-width="1.1"/>
<text x="332.3" y="344" font-size="24.7" fill="#7ce6e6" textLength="28.5" lengthAdjust="spacingAndGlyphs" text-anchor="middle" font-family='"Liberation Sans", sans-serif' stroke="#000000" stroke-width="0.9">16A</text>
<text x="331.5" y="367.6" font-size="11" fill="#000" textLength="36" lengthAdjust="spacingAndGlyphs" text-anchor="middle" font-family='"Liberation Sans", "DejaVu Sans", sans-serif'>Imp002</text>
<text x="331.5" y="380.6" font-size="11" fill="#000" textLength="85" lengthAdjust="spacingAndGlyphs" text-anchor="middle" font-family='"Liberation Sans", "DejaVu Sans", sans-serif'>Presa 16A 2P+PE</text>
<rect x="282" y="397" width="100" height="75" fill="#000000"/>
<path d="M332.300 408.2 v20.600 M321.600 428.8 h21.200 M322 438.8 c1 -13 19 -13 20 0" fill="none" stroke="#7ce6e6" stroke-width="1.1"/>
<text x="332.3" y="462" font-size="24.7" fill="#7ce6e6" textLength="56" lengthAdjust="spacingAndGlyphs" text-anchor="middle" font-family='"Liberation Sans", sans-serif' stroke="#000000" stroke-width="0.9">10/16A</text>
<text x="331.5" y="485.6" font-size="11" fill="#000" textLength="43" lengthAdjust="spacingAndGlyphs" text-anchor="middle" font-family='"Liberation Sans", "DejaVu Sans", sans-serif'>Imp002B</text>
<text x="331.5" y="498.6" font-size="11" fill="#000" textLength="109" lengthAdjust="spacingAndGlyphs" text-anchor="middle" font-family='"Liberation Sans", "DejaVu Sans", sans-serif'>Bipresa 10/16A 2P+PE</text>
<rect x="282" y="515" width="100" height="75" fill="#000000"/>
<path d="M332.300 526.2 v20.600 M321.600 546.8 h21.200 M322 556.8 c1 -13 19 -13 20 0" fill="none" stroke="#7ce6e6" stroke-width="1.1"/>
<text x="332.3" y="580" font-size="24.7" fill="#7ce6e6" textLength="36.5" lengthAdjust="spacingAndGlyphs" text-anchor="middle" font-family='"Liberation Sans", sans-serif' stroke="#000000" stroke-width="0.9">UNEL</text>
<text x="331.5" y="603.6" font-size="11" fill="#000" textLength="36" lengthAdjust="spacingAndGlyphs" text-anchor="middle" font-family='"Liberation Sans", "DejaVu Sans", sans-serif'>Imp578</text>
<text x="331.5" y="616.6" font-size="11" fill="#000" textLength="128" lengthAdjust="spacingAndGlyphs" text-anchor="middle" font-family='"Liberation Sans", "DejaVu Sans", sans-serif'>Presa 10/16A 2P+PE UNEL</text>
<rect x="282" y="633" width="100" height="75" fill="#000000"/>
<path d="M332.300 644 v20.400 M321.600 664.4 h21.200 M312.200 675.2 h8.700 c1.500 -14 21 -14 22.500 0 h9" fill="none" stroke="#7ce6e6" stroke-width="1.1"/>
<text x="332.3" y="698.3" font-size="24.7" fill="#7ce6e6" textLength="61" lengthAdjust="spacingAndGlyphs" text-anchor="middle" font-family='"Liberation Sans", sans-serif' stroke="#000000" stroke-width="0.9">SCHUKO</text>
<text x="331.5" y="721.6" font-size="11" fill="#000" textLength="36" lengthAdjust="spacingAndGlyphs" text-anchor="middle" font-family='"Liberation Sans", "DejaVu Sans", sans-serif'>Imp418</text>
<text x="331.5" y="734.6" font-size="11" fill="#000" textLength="98" lengthAdjust="spacingAndGlyphs" text-anchor="middle" font-family='"Liberation Sans", "DejaVu Sans", sans-serif'>Presa 2P+PE Schuko</text>
<text x="218" y="899.5" font-size="11" fill="#000" textLength="96" lengthAdjust="spacingAndGlyphs" text-anchor="middle" font-weight="bold" font-family='"Liberation Sans", "DejaVu Sans", sans-serif'>Presa 10A 2P+PE</text>
<rect x="14.5" y="911.5" width="12" height="12" fill="#ffffff" stroke="#333333" stroke-width="1" rx="2"/>
<text x="30" y="921.5" font-size="11" fill="#000" textLength="152" lengthAdjust="spacingAndGlyphs" font-family='"Liberation Sans", "DejaVu Sans", sans-serif'>Chiudi dopo inserimento Simbolo</text>
<g opacity="0.999"><text x="338.5" y="931" font-size="21" fill="#2d4a2c" textLength="93" lengthAdjust="spacingAndGlyphs" font-weight="bold" font-family='"Liberation Sans", sans-serif' stroke="#2d4a2c" stroke-width="0.9">START</text></g>
<text x="369" y="938.5" font-size="6" fill="#2d4a2c" textLength="34" lengthAdjust="spacingAndGlyphs" font-weight="bold" font-family='"Liberation Sans", sans-serif'>IMPIANTI</text>
<rect x="441" y="98" width="53" height="812" fill="#3b4351"/>
<path d="M441.500 122 h14 a3 3 0 0 1 3 3 v115 a3 3 0 0 1 -3 3 h-14z" fill="#2b303a" stroke="#252a33" stroke-width="1"/>
<text x="0" y="0" font-size="12" fill="#c9ccd2" textLength="63" lengthAdjust="spacingAndGlyphs" font-family='"Liberation Sans", sans-serif' transform="translate(455.500 214.5) rotate(-90)">Libreria BLK</text>
<path d="M441.500 246 h14 a3 3 0 0 1 3 3 v112 a3 3 0 0 1 -3 3 h-14" fill="#3b4351" stroke="#2a2f39" stroke-width="1"/>
<text x="0" y="0" font-size="12" fill="#f4f5f7" textLength="50" lengthAdjust="spacingAndGlyphs" font-family='"Liberation Sans", sans-serif' transform="translate(455.500 329.5) rotate(-90)">IMPIANTI</text>
<rect x="465.5" y="98.5" width="24" height="29.5" fill="#3b4351" stroke="#2a2f39" stroke-width="1"/>
<rect x="465.5" y="130.5" width="24" height="296" fill="#3b4351" stroke="#2a2f39" stroke-width="1"/>
<rect x="471" y="101.5" width="1" height="1" fill="#c6c9cf"/>
<rect x="471" y="103.5" width="1" height="1" fill="#c6c9cf"/>
<rect x="473" y="101.5" width="1" height="1" fill="#c6c9cf"/>
<rect x="473" y="103.5" width="1" height="1" fill="#c6c9cf"/>
<rect x="475" y="101.5" width="1" height="1" fill="#c6c9cf"/>
<rect x="475" y="103.5" width="1" height="1" fill="#c6c9cf"/>
<rect x="477" y="101.5" width="1" height="1" fill="#c6c9cf"/>
<rect x="477" y="103.5" width="1" height="1" fill="#c6c9cf"/>
<rect x="479" y="101.5" width="1" height="1" fill="#c6c9cf"/>
<rect x="479" y="103.5" width="1" height="1" fill="#c6c9cf"/>
<rect x="481" y="101.5" width="1" height="1" fill="#c6c9cf"/>
<rect x="481" y="103.5" width="1" height="1" fill="#c6c9cf"/>
<rect x="483" y="101.5" width="1" height="1" fill="#c6c9cf"/>
<rect x="483" y="103.5" width="1" height="1" fill="#c6c9cf"/>
<rect x="471" y="133.2" width="1" height="1" fill="#c6c9cf"/>
<rect x="471" y="135.2" width="1" height="1" fill="#c6c9cf"/>
<rect x="473" y="133.2" width="1" height="1" fill="#c6c9cf"/>
<rect x="473" y="135.2" width="1" height="1" fill="#c6c9cf"/>
<rect x="475" y="133.2" width="1" height="1" fill="#c6c9cf"/>
<rect x="475" y="135.2" width="1" height="1" fill="#c6c9cf"/>
<rect x="477" y="133.2" width="1" height="1" fill="#c6c9cf"/>
<rect x="477" y="135.2" width="1" height="1" fill="#c6c9cf"/>
<rect x="479" y="133.2" width="1" height="1" fill="#c6c9cf"/>
<rect x="479" y="135.2" width="1" height="1" fill="#c6c9cf"/>
<rect x="481" y="133.2" width="1" height="1" fill="#c6c9cf"/>
<rect x="481" y="135.2" width="1" height="1" fill="#c6c9cf"/>
<rect x="483" y="133.2" width="1" height="1" fill="#c6c9cf"/>
<rect x="483" y="135.2" width="1" height="1" fill="#c6c9cf"/>
<path d="M469.500 111 l2 -1.500 h4 l1 1.500 h8.500 v11.500 h-15.500z" fill="#b01c1c"/>
<path d="M471 113 h13 l-1 7.500 h-12.500z" fill="#f4ece4"/>
<path d="M471 116.500 l13 -1.500 v4 l-13 1.500z" fill="#d03030"/>
<path d="M471 114.500 l6 -1 v1.500 l-6 1z" fill="#4aa040"/>
<path d="M469.500 120.500 h15.500 v2 h-15.500z" fill="#8a1010"/>
<path d="M469.500 149 L472.500 144.200 H480 L483 149 M471 149 V154.500 H476.500 M472.800 150.500 h2.700 v2.700 h-2.700z" fill="none" stroke="#e4e6ea" stroke-width="1.3"/>
<circle cx="480.8" cy="153.8" r="3" fill="#3b4351" stroke="#e4e6ea" stroke-width="1.7"/>
<circle cx="480.8" cy="153.8" r="0.9" fill="#e4e6ea"/>
<path d="M472.300 164.500 v4 M469.800 169 h5 M472.300 169 l-1.800 6 M472.300 169 l3.400 4.500" fill="none" stroke="#e4e6ea" stroke-width="1.2"/>
<circle cx="470.5" cy="177.3" r="1.9" fill="none" stroke="#e4e6ea" stroke-width="1.2"/>
<circle cx="480.5" cy="175" r="3" fill="#3b4351" stroke="#e4e6ea" stroke-width="1.7"/>
<circle cx="480.5" cy="175" r="0.9" fill="#e4e6ea"/>
<rect x="468" y="185.5" width="19" height="1.5" fill="#e4e6ea"/>
<rect x="469" y="191.5" width="4.8" height="3.3" fill="#e4e6ea"/>
<rect x="474.6" y="191.5" width="4.8" height="3.3" fill="#e4e6ea"/>
<rect x="480.2" y="191.5" width="5.2" height="3.3" fill="#e4e6ea"/>
<rect x="469" y="195.7" width="2" height="3.3" fill="#e4e6ea"/>
<rect x="471.8" y="195.7" width="4.8" height="3.3" fill="#e4e6ea"/>
<rect x="477.4" y="195.7" width="4.8" height="3.3" fill="#e4e6ea"/>
<rect x="483" y="195.7" width="2.4" height="3.3" fill="#e4e6ea"/>
<rect x="469" y="199.9" width="4.8" height="3.3" fill="#e4e6ea"/>
<rect x="474.6" y="199.9" width="4.8" height="3.3" fill="#e4e6ea"/>
<rect x="480.2" y="199.9" width="5.2" height="3.3" fill="#e4e6ea"/>
<rect x="469" y="204.1" width="2" height="3.3" fill="#e4e6ea"/>
<rect x="471.8" y="204.1" width="4.8" height="3.3" fill="#e4e6ea"/>
<rect x="477.4" y="204.1" width="4.8" height="3.3" fill="#e4e6ea"/>
<rect x="483" y="204.1" width="2.4" height="3.3" fill="#e4e6ea"/>
<rect x="469.5" y="214.5" width="8" height="15" fill="#8f949e" stroke="#e4e6ea" stroke-width="1.3"/>
<rect x="471.5" y="217" width="4" height="6" fill="#3b4351"/>
<rect x="471" y="225" width="5" height="2.5" fill="#e4e6ea"/>
<rect x="480.5" y="215.5" width="5" height="4" fill="none" stroke="#e4e6ea" stroke-width="1.2"/>
<rect x="480.5" y="221.5" width="5" height="4" fill="none" stroke="#e4e6ea" stroke-width="1.2"/>
<path d="M486 227 v3.500 h-3.500z" fill="#e4e6ea"/>
<path d="M470.700 254 v-5 h4.400 v-5 h4.400 v-5 h4 v15z" fill="none" stroke="#e4e6ea" stroke-width="1.5"/>
<path d="M473.500 262.500 h8 l3.500 9 h-15z M471.500 267.500 h12 M475.800 262.500 l-1.800 9 M479.200 262.500 l1 9 M477.500 262.500 l-0.400 9" fill="none" stroke="#e4e6ea" stroke-width="1.2"/>
<path d="M485.800 272 v3.500 h-3.500z" fill="#e4e6ea"/>
<rect x="468" y="279.5" width="19" height="1.5" fill="#e4e6ea"/>
<rect x="469.5" y="286.5" width="16" height="15.5" fill="#f2f2f2"/>
<rect x="481.3" y="286" width="5" height="6" fill="#3b4351"/>
<rect x="470.3" y="287.3" width="10.5" height="5.2" fill="#7cc242"/>
<rect x="470.3" y="293.5" width="7.5" height="7" fill="#f0c444"/>
<rect x="479.3" y="293.5" width="4" height="6.5" fill="#5cb4ec"/>
<rect x="468" y="307.5" width="19" height="1.5" fill="#e4e6ea"/>
<path d="M470.500 314.700 h10.500 l4.500 4.500 v10.400 h-15z" fill="#ffffff"/>
<rect x="469" y="316.3" width="2.3" height="1" fill="#1a1a1a"/>
<rect x="469" y="318.5" width="2.3" height="1" fill="#1a1a1a"/>
<rect x="469" y="320.7" width="2.3" height="1" fill="#1a1a1a"/>
<rect x="469" y="322.9" width="2.3" height="1" fill="#1a1a1a"/>
<rect x="469" y="325.1" width="2.3" height="1" fill="#1a1a1a"/>
<rect x="469" y="327.3" width="2.3" height="1" fill="#1a1a1a"/>
<path d="M477.800 317.500 v4.500 M473.500 322.200 h8.600 M477.800 322.200 q-0.500 3.500 -4 6.500 M477.800 322.200 q0.500 3.500 4 6.500" fill="none" stroke="#000" stroke-width="1.2"/>
<path d="M470.700 338 v12.500 h13 M470.700 350.500 l8.500 -8.500" fill="none" stroke="#e4e6ea" stroke-width="1.1"/>
<circle cx="470.7" cy="337.7" r="1" fill="#e03030"/>
<circle cx="479.5" cy="341.5" r="1" fill="#e03030"/>
<circle cx="483.5" cy="349.5" r="1" fill="#e03030"/>
<path d="M486 348.500 v3.500 h-3.500z" fill="#e4e6ea"/>
<rect x="470.8" y="359.8" width="12.5" height="12" fill="#3b4351" stroke="#c2c6ce" stroke-width="1.2"/>
<path d="M477 361 v4 M477 365 q-0.800 3.500 -4.500 4.500 M477 365 q0.800 3.500 4.500 4.500" fill="none" stroke="#5aa8f4" stroke-width="1.4"/>
<path d="M486 370.500 v3.500 h-3.500z" fill="#e4e6ea"/>
<path d="M470 394.500 v-13.500 h15.500" fill="none" stroke="#e4e6ea" stroke-width="2"/>
<path d="M478 384.500 l2.200 2.200 h-4.400z M478 395.500 l2.200 -2.200 h-4.400z M472.800 390 l2.200 -2.200 v4.400z M483.200 390 l-2.200 -2.200 v4.400z" fill="none" stroke="#b8bcc4" stroke-width="0.9"/>
<rect x="476" y="388" width="4" height="4" fill="none" stroke="#b8bcc4" stroke-width="0.9"/>
<path d="M486 392.500 v3.500 h-3.500z" fill="#e4e6ea"/>
<rect x="468" y="401.5" width="19" height="1.5" fill="#e4e6ea"/>
<path d="M468.800 411 h2.700 l2 9 h8 l1.800 -6.300 h-10.700" fill="none" stroke="#e4e6ea" stroke-width="1.4"/>
<circle cx="475" cy="422.8" r="1.2" fill="#e4e6ea"/>
<circle cx="481" cy="422.8" r="1.2" fill="#e4e6ea"/>
<circle cx="480.5" cy="411.5" r="3.1" fill="#5cc040"/>
<path d="M478.900 411.500 l1.200 1.300 l2.200 -2.600" fill="none" stroke="#fff" stroke-width="1"/>
<rect x="441" y="910" width="1296" height="42" fill="#3b4351"/>
<rect x="2" y="944" width="439" height="8" fill="#3b4351"/>
<rect x="465" y="911.5" width="58" height="36" fill="#2c313b"/>
<rect x="469" y="921" width="1.5" height="1.4" fill="#eef0f3"/>
<rect x="472" y="921" width="1.5" height="1.4" fill="#eef0f3"/>
<rect x="469" y="923.1" width="1.5" height="1.4" fill="#eef0f3"/>
<rect x="472" y="923.1" width="1.5" height="1.4" fill="#eef0f3"/>
<rect x="469" y="925.2" width="1.5" height="1.4" fill="#eef0f3"/>
<rect x="472" y="925.2" width="1.5" height="1.4" fill="#eef0f3"/>
<rect x="469" y="927.3" width="1.5" height="1.4" fill="#eef0f3"/>
<rect x="472" y="927.3" width="1.5" height="1.4" fill="#eef0f3"/>
<rect x="469" y="929.4" width="1.5" height="1.4" fill="#eef0f3"/>
<rect x="472" y="929.4" width="1.5" height="1.4" fill="#eef0f3"/>
<rect x="469" y="931.5" width="1.5" height="1.4" fill="#eef0f3"/>
<rect x="472" y="931.5" width="1.5" height="1.4" fill="#eef0f3"/>
<rect x="469" y="933.6" width="1.5" height="1.4" fill="#eef0f3"/>
<rect x="472" y="933.6" width="1.5" height="1.4" fill="#eef0f3"/>
<rect x="469" y="935.7" width="1.5" height="1.4" fill="#eef0f3"/>
<rect x="472" y="935.7" width="1.5" height="1.4" fill="#eef0f3"/>
<path d="M482 926.500 l7 7 M489 926.500 l-7 7" fill="none" stroke="#e0e2e6" stroke-width="1.6"/>
<path d="M503 936.500 l7 -7" fill="none" stroke="#e0e2e6" stroke-width="2.4" stroke-linecap="round"/>
<path d="M509.500 924 a4 4 0 1 0 5.500 5.500 l-3.200 0.700 l-2.300 -2.300z" fill="#e0e2e6"/>
<rect x="523" y="912.5" width="1213" height="35" fill="#ffffff" rx="3"/>
<rect x="527.5" y="924.5" width="15" height="11" fill="#ffffff" stroke="#6a6a6a" stroke-width="1"/>
<rect x="527.5" y="924.5" width="15" height="2" fill="#6a6a6a"/>
<path d="M529.500 929 l2.500 1.800 l-2.500 1.800 M533 933.500 h3.500" fill="none" stroke="#444" stroke-width="0.9"/>
<path d="M545.500 928.500 h6 l-3 3.500z" fill="#555"/>
<text x="559" y="935" font-size="12.5" fill="#888888" textLength="133" lengthAdjust="spacingAndGlyphs" font-family='"Liberation Mono", monospace' font-style="italic">Digitare un comando</text>
<rect x="2" y="951" width="1735" height="33" fill="#2a2f39"/>
<rect x="5" y="954" width="1096" height="25" fill="#3d4554"/>
<rect x="1110" y="955" width="264" height="23" fill="#3b4351"/>
<text x="1115" y="971" font-size="12" fill="#f0f1f3" textLength="80" lengthAdjust="spacingAndGlyphs" font-family='"Liberation Sans", sans-serif'>SPAC Foglio:  0</text>
<text x="1207" y="971" font-size="12" fill="#f0f1f3" textLength="163" lengthAdjust="spacingAndGlyphs" font-family='"Liberation Sans", sans-serif'>Progetto: PJCENTER (BTICINO)</text>
<rect x="1378" y="955" width="60" height="23" fill="#3b4351"/>
<text x="1381" y="971" font-size="12" fill="#f0f1f3" textLength="56" lengthAdjust="spacingAndGlyphs" font-family='"Liberation Sans", sans-serif'>MODELLO</text>
<rect x="1443" y="955" width="64" height="23" fill="#3b4351"/>
<path d="M1447 963.500 h15 M1447 969.500 h15 M1451.500 959 v15 M1457.500 959 v15" fill="none" stroke="#e4e6ea" stroke-width="1.3"/>
<rect x="1468" y="956" width="22" height="22" fill="#6a8ec6"/>
<rect x="1473" y="961" width="2" height="2" fill="#ffffff"/>
<rect x="1473" y="965.5" width="2" height="2" fill="#ffffff"/>
<rect x="1473" y="970" width="2" height="2" fill="#ffffff"/>
<rect x="1477.5" y="961" width="2" height="2" fill="#ffffff"/>
<rect x="1477.5" y="965.5" width="2" height="2" fill="#ffffff"/>
<rect x="1477.5" y="970" width="2" height="2" fill="#ffffff"/>
<rect x="1482" y="961" width="2" height="2" fill="#ffffff"/>
<rect x="1482" y="965.5" width="2" height="2" fill="#ffffff"/>
<rect x="1482" y="970" width="2" height="2" fill="#ffffff"/>
<path d="M1495 964.500 h7 l-3.500 4z" fill="#d4d6da"/>
<rect x="1510" y="955" width="104" height="23" fill="#3b4351"/>
<path d="M1514.500 960 v14 h15 M1514.500 969.500 h4.500 v4.500" fill="none" stroke="#e4e6ea" stroke-width="1.3"/>
<circle cx="1545.5" cy="967" r="6.5" fill="none" stroke="#e4e6ea" stroke-width="1.3"/>
<path d="M1545.500 967 l7 -7 M1545.500 967 h8" fill="none" stroke="#e4e6ea" stroke-width="1.3"/>
<path d="M1562 964.500 h7 l-3.500 4z" fill="#d4d6da"/>
<line x1="1585.5" y1="959" x2="1585.5" y2="974" stroke="#58c858" stroke-width="1.3"/>
<line x1="1579" y1="960" x2="1592" y2="973" stroke="#e04848" stroke-width="1.3"/>
<circle cx="1585.5" cy="966.5" r="1.4" fill="#fff" stroke="#333" stroke-width="0.6"/>
<path d="M1602 964.500 h7 l-3.500 4z" fill="#d4d6da"/>
<rect x="1615.5" y="955" width="63" height="23" fill="#3b4351"/>
<rect x="1616" y="956" width="22" height="22" fill="#6a8ec6"/>
<path d="M1619.500 973 h14 M1619.500 973 l12 -12" fill="none" stroke="#fff" stroke-width="1.4"/>
<rect x="1624" y="965" width="3" height="3" fill="#fff"/>
<rect x="1645.5" y="962.5" width="12" height="12" fill="none" stroke="#e4e6ea" stroke-width="1.3"/>
<rect x="1643.5" y="959.5" width="4" height="4" fill="#3b4351" stroke="#e8a060" stroke-width="1"/>
<path d="M1667 964.500 h7 l-3.500 4z" fill="#d4d6da"/>
<rect x="1682" y="955" width="24" height="23" fill="#3b4351"/>
<path d="M1686 966.500 h16 M1694 958.500 v16" fill="none" stroke="#e4e6ea" stroke-width="1.6"/>
<rect x="1709" y="955" width="24" height="23" fill="#3b4351"/>
<path d="M1712.500 961 h17 M1712.500 966.500 h17 M1712.500 972 h17" fill="none" stroke="#e4e6ea" stroke-width="1.6"/>
<rect x="0" y="984" width="1739" height="2" fill="#3c78ad"/>
<defs><pattern id="hatch" width="2.750" height="2.750" patternUnits="userSpaceOnUse"><rect width="2.750" height="2.750" fill="#ffffff"/><path d="M0 0.500 h2.750 M0.500 0 v2.750" stroke="#303030" stroke-width="0.8"/></pattern><clipPath id="dclip"><rect x="494" y="97.500" width="1241" height="811"/></clipPath></defs>
<rect x="494" y="97.5" width="1241" height="811" fill="#ffffff"/>
<g clip-path="url(#dclip)">
<line x1="494" y1="110" x2="830.5" y2="110" stroke="#1a1a1a" stroke-width="1"/>
<line x1="830.5" y1="97" x2="830.5" y2="110" stroke="#1a1a1a" stroke-width="1"/>
<line x1="494" y1="134.5" x2="830.5" y2="134.5" stroke="#1a1a1a" stroke-width="1"/>
<line x1="830.5" y1="134.5" x2="830.5" y2="364.5" stroke="#1a1a1a" stroke-width="1"/>
<line x1="494" y1="364.5" x2="830.5" y2="364.5" stroke="#1a1a1a" stroke-width="1"/>
<line x1="855.5" y1="97" x2="855.5" y2="364.5" stroke="#1a1a1a" stroke-width="1"/>
<line x1="855.5" y1="364.5" x2="1373" y2="364.5" stroke="#1a1a1a" stroke-width="1"/>
<line x1="1028.5" y1="97" x2="1028.5" y2="213.5" stroke="#1a1a1a" stroke-width="1"/>
<line x1="1028.5" y1="213.5" x2="1389.5" y2="213.5" stroke="#1a1a1a" stroke-width="1"/>
<line x1="1364.5" y1="97" x2="1364.5" y2="213.5" stroke="#1a1a1a" stroke-width="1"/>
<line x1="1364.5" y1="177" x2="1389.5" y2="177" stroke="#1a1a1a" stroke-width="1"/>
<line x1="1389.5" y1="177" x2="1389.5" y2="213.5" stroke="#1a1a1a" stroke-width="1"/>
<line x1="494" y1="388.5" x2="873.5" y2="388.5" stroke="#1a1a1a" stroke-width="1"/>
<line x1="970.5" y1="388.5" x2="982.5" y2="388.5" stroke="#1a1a1a" stroke-width="1"/>
<line x1="982.5" y1="388.5" x2="982.5" y2="843.5" stroke="#1a1a1a" stroke-width="1"/>
<line x1="494" y1="843.5" x2="648.5" y2="843.5" stroke="#1a1a1a" stroke-width="1"/>
<line x1="794.5" y1="843.5" x2="982.5" y2="843.5" stroke="#1a1a1a" stroke-width="1"/>
<line x1="1006.5" y1="388.5" x2="1018.5" y2="388.5" stroke="#1a1a1a" stroke-width="1"/>
<line x1="1116" y1="388.5" x2="1231.5" y2="388.5" stroke="#1a1a1a" stroke-width="1"/>
<line x1="1006.5" y1="388.5" x2="1006.5" y2="843.5" stroke="#1a1a1a" stroke-width="1"/>
<line x1="1231.5" y1="388.5" x2="1231.5" y2="843.5" stroke="#1a1a1a" stroke-width="1"/>
<line x1="1006.5" y1="843.5" x2="1030.5" y2="843.5" stroke="#1a1a1a" stroke-width="1"/>
<line x1="1128.5" y1="843.5" x2="1231.5" y2="843.5" stroke="#1a1a1a" stroke-width="1"/>
<line x1="1373" y1="364.5" x2="1373" y2="388.5" stroke="#1a1a1a" stroke-width="1"/>
<line x1="1255.5" y1="388.5" x2="1373" y2="388.5" stroke="#1a1a1a" stroke-width="1"/>
<line x1="1255.5" y1="388.5" x2="1255.5" y2="843.5" stroke="#1a1a1a" stroke-width="1"/>
<line x1="1325.5" y1="388.5" x2="1325.5" y2="843.5" stroke="#1a1a1a" stroke-width="1"/>
<line x1="1255.5" y1="843.5" x2="1430.5" y2="843.5" stroke="#1a1a1a" stroke-width="1"/>
<line x1="1529" y1="843.5" x2="1674" y2="843.5" stroke="#1a1a1a" stroke-width="1"/>
<line x1="1674" y1="390.5" x2="1674" y2="843.5" stroke="#1a1a1a" stroke-width="1"/>
<line x1="1653.5" y1="390.5" x2="1674" y2="390.5" stroke="#1a1a1a" stroke-width="1"/>
<line x1="1653.5" y1="365.5" x2="1653.5" y2="390.5" stroke="#1a1a1a" stroke-width="1"/>
<line x1="1653.5" y1="365.5" x2="1710.5" y2="365.5" stroke="#1a1a1a" stroke-width="1"/>
<line x1="1710.5" y1="365.5" x2="1710.5" y2="449.5" stroke="#1a1a1a" stroke-width="1"/>
<line x1="1710.5" y1="449.5" x2="1735" y2="449.5" stroke="#1a1a1a" stroke-width="1"/>
<line x1="1710.5" y1="485.5" x2="1735" y2="485.5" stroke="#1a1a1a" stroke-width="1"/>
<line x1="1710.5" y1="485.5" x2="1710.5" y2="880.5" stroke="#1a1a1a" stroke-width="1"/>
<line x1="1710.5" y1="771.5" x2="1735" y2="771.5" stroke="#1a1a1a" stroke-width="1"/>
<line x1="494" y1="880.5" x2="1710.5" y2="880.5" stroke="#1a1a1a" stroke-width="1"/>
<line x1="494" y1="100.3" x2="619" y2="100.3" stroke="#111111" stroke-width="2"/>
<rect x="618.5" y="98.5" width="4" height="3.5" fill="none" stroke="#111111" stroke-width="0.9"/>
<path d="M1046.500 96 V194.500 H1340 V121" fill="none" stroke="#111111" stroke-width="2"/>
<path d="M1050 120.500 V117.500 H1190.500 V120.500 M1196 120.500 V117.500 H1340 M1046.500 120.500 H1340" fill="none" stroke="#111111" stroke-width="1"/>
<rect x="1109" y="114.5" width="3" height="3" fill="#111111"/>
<rect x="1127" y="114.5" width="3" height="3" fill="#111111"/>
<rect x="1255.5" y="114.5" width="3" height="3" fill="#111111"/>
<rect x="1273.5" y="114.5" width="3" height="3" fill="#111111"/>
<path d="M1364.500 100.500 H1418 v3 H1364.500" fill="none" stroke="#111111" stroke-width="1"/>
<rect x="1027.5" y="95" width="116.5" height="6" fill="none" stroke="#b82c2c" stroke-width="1"/>
<line x1="1038.5" y1="95" x2="1038.5" y2="101" stroke="#b82c2c" stroke-width="1"/>
<line x1="771" y1="98" x2="855.5" y2="98" stroke="#b82c2c" stroke-width="1"/>
<rect x="830.5" y="219.5" width="25" height="121" fill="none" stroke="#b82c2c" stroke-width="1"/>
<line x1="843" y1="219.5" x2="843" y2="340.5" stroke="#b82c2c" stroke-width="1"/>
<line x1="806" y1="279.5" x2="879" y2="279.5" stroke="#b82c2c" stroke-width="1"/>
<circle cx="855.5" cy="219" r="2.6" fill="none" stroke="#b82c2c" stroke-width="1"/>
<rect x="873.5" y="364.5" width="97" height="24" fill="none" stroke="#b82c2c" stroke-width="1.2"/>
<line x1="873.5" y1="376.5" x2="970.5" y2="376.5" stroke="#b82c2c" stroke-width="1"/>
<line x1="921.5" y1="340.5" x2="921.5" y2="413" stroke="#b82c2c" stroke-width="1"/>
<path d="M970.500 388.500 V486 A97 97.500 0 0 1 873.500 388.500" fill="none" stroke="#b82c2c" stroke-width="1.3"/>
<rect x="1018.5" y="364.5" width="97.5" height="24" fill="none" stroke="#b82c2c" stroke-width="1.2"/>
<line x1="1018.5" y1="376.5" x2="1116" y2="376.5" stroke="#b82c2c" stroke-width="1"/>
<line x1="1067.5" y1="340.5" x2="1067.5" y2="413" stroke="#b82c2c" stroke-width="1"/>
<path d="M1018.500 388.500 V486 A97.500 97.500 0 0 0 1116 388.500" fill="none" stroke="#b82c2c" stroke-width="1.3"/>
<rect x="648.8" y="844" width="145.4" height="36.3" fill="#ffffff" stroke="#a83232" stroke-width="1.7"/>
<line x1="648.5" y1="862.4" x2="794.5" y2="862.4" stroke="#a83232" stroke-width="1.5"/>
<rect x="1030.8" y="844" width="97.4" height="36.3" fill="#ffffff" stroke="#a83232" stroke-width="1.7"/>
<line x1="1030.5" y1="862.4" x2="1128.5" y2="862.4" stroke="#a83232" stroke-width="1.5"/>
<rect x="1430.8" y="844" width="97.9" height="36.3" fill="#ffffff" stroke="#a83232" stroke-width="1.7"/>
<line x1="1430.5" y1="862.4" x2="1529" y2="862.4" stroke="#a83232" stroke-width="1.5"/>
<line x1="1733.5" y1="449.5" x2="1733.5" y2="485.5" stroke="#7a1010" stroke-width="2"/>
<line x1="982.5" y1="893" x2="982.5" y2="909" stroke="#58e020" stroke-width="1.2"/>
<rect x="982" y="887" width="1" height="1" fill="#d02020"/>
<line x1="1006.5" y1="893" x2="1006.5" y2="909" stroke="#58e020" stroke-width="1.2"/>
<rect x="1006" y="887" width="1" height="1" fill="#d02020"/>
<line x1="1231.5" y1="893" x2="1231.5" y2="909" stroke="#58e020" stroke-width="1.2"/>
<rect x="1231" y="887" width="1" height="1" fill="#d02020"/>
<line x1="1255.5" y1="893" x2="1255.5" y2="909" stroke="#58e020" stroke-width="1.2"/>
<rect x="1255" y="887" width="1" height="1" fill="#d02020"/>
<line x1="1674" y1="893" x2="1674" y2="909" stroke="#58e020" stroke-width="1.2"/>
<rect x="1673.5" y="887" width="1" height="1" fill="#d02020"/>
<line x1="1710.5" y1="886" x2="1710.5" y2="909" stroke="#58e020" stroke-width="1.2"/>
<rect x="1710" y="880" width="1" height="1" fill="#d02020"/>
<path d="M494 353 H564.500 V134.500 M494 141.500 H558.500 V339.500 H494 M558.500 141.500 L564.500 135 M558.500 339.500 L564.500 353 M558.500 339.500 L560 353" fill="none" stroke="#111111" stroke-width="1"/>
<path d="M494 146 C505 142.500 514 141.600 522 141.700 C545 143 558.500 158 558.500 177" fill="none" stroke="#111111" stroke-width="1"/>
<circle cx="515.9" cy="155.3" r="4.7" fill="none" stroke="#111111" stroke-width="1.6"/>
<path d="M601.1 137 V186.5 a4.500 4.500 0 0 0 4.500 4.500 H674.4 a4.500 4.500 0 0 0 4.500 -4.500 V137" fill="none" stroke="#111111" stroke-width="2.6"/>
<path d="M606.1 137 V184.5 a1.500 1.500 0 0 0 1.500 1.500 H672.4 a1.500 1.500 0 0 0 1.500 -1.500 V137" fill="none" stroke="#222" stroke-width="2"/>
<line x1="600.5" y1="137.3" x2="679.5" y2="137.3" stroke="#111111" stroke-width="1.6"/>
<path d="M712.6 137 V190 a4.500 4.500 0 0 0 4.500 4.500 H749.9 a4.500 4.500 0 0 0 4.500 -4.500 V137" fill="none" stroke="#111111" stroke-width="2.6"/>
<path d="M717.6 137 V188 a1.500 1.500 0 0 0 1.500 1.500 H747.9 a1.500 1.500 0 0 0 1.500 -1.500 V137" fill="none" stroke="#222" stroke-width="2"/>
<line x1="712" y1="137.3" x2="755" y2="137.3" stroke="#111111" stroke-width="1.6"/>
<path d="M773.6 137 V190 a4.500 4.500 0 0 0 4.500 4.500 H811.4 a4.500 4.500 0 0 0 4.500 -4.500 V137" fill="none" stroke="#111111" stroke-width="2.6"/>
<path d="M778.6 137 V188 a1.500 1.500 0 0 0 1.500 1.500 H809.4 a1.500 1.500 0 0 0 1.500 -1.500 V137" fill="none" stroke="#222" stroke-width="2"/>
<line x1="773" y1="137.3" x2="816.5" y2="137.3" stroke="#111111" stroke-width="1.6"/>
<circle cx="629.6" cy="143" r="3" fill="none" stroke="#111111" stroke-width="1"/>
<circle cx="650.5" cy="143" r="3" fill="none" stroke="#111111" stroke-width="1"/>
<line x1="632.5" y1="143" x2="647.5" y2="143" stroke="#111111" stroke-width="1"/>
<path d="M640 143 v8 l-4 3" fill="none" stroke="#111111" stroke-width="1"/>
<path d="M720 190 V150 c0 -12 27 -12 27 0 V190z" fill="none" stroke="#111111" stroke-width="1"/>
<circle cx="725.5" cy="142.5" r="2.4" fill="none" stroke="#111111" stroke-width="1"/>
<circle cx="739.5" cy="142.5" r="2.4" fill="none" stroke="#111111" stroke-width="1"/>
<circle cx="733" cy="154" r="3.4" fill="none" stroke="#111111" stroke-width="1"/>
<circle cx="738" cy="170" r="3.2" fill="none" stroke="#111111" stroke-width="1"/>
<path d="M785 185 V150 c0 -12 20 -12 20 0 V185 c0 10 -20 10 -20 0" fill="none" stroke="#111111" stroke-width="1"/>
<path d="M776 146.500 h37" fill="none" stroke="#111111" stroke-width="1"/>
<path d="M494 396.5 H530.500 V461.5 H494" fill="none" stroke="#111111" stroke-width="2.6"/>
<path d="M494 399.5 H527 M494 458.5 H527" fill="none" stroke="#111111" stroke-width="0.8"/>
<path d="M494 770 H530.500 V836 H494" fill="none" stroke="#111111" stroke-width="2.6"/>
<path d="M494 773 H527 M494 833 H527" fill="none" stroke="#111111" stroke-width="0.8"/>
<path d="M494 467.500 H701.500 V761.500 H494 M695.500 467.500 V761.500 M494 614.500 H695.500" fill="none" stroke="#111111" stroke-width="1.1"/>
<path d="M695.500 473.500 H701.500 M695.500 610 H701.500 M695.500 620.500 H701.500 M695.500 756.500 H701.500" fill="none" stroke="#111111" stroke-width="0.8"/>
<path d="M528.500 524.500 L587 468.500 V524.500 H528.500 V703 H587 V761 L528.500 703" fill="none" stroke="#111111" stroke-width="1.1"/>
<path d="M494 506 H508.500 V579 H494 M497 506 V579 M501 506 V579 M505 506 V579" fill="none" stroke="#111111" stroke-width="0.9"/>
<path d="M494 653.5 H508.500 V726.5 H494 M497 653.5 V726.5 M501 653.5 V726.5 M505 653.5 V726.5" fill="none" stroke="#111111" stroke-width="0.9"/>
<path d="M904 547.500 H978 V839 H904 M900.500 551 V836 M904 547.500 V839 M900.500 551 L904 547.500 M900.500 836 L904 839" fill="none" stroke="#111111" stroke-width="1.1"/>
<path d="M900.500 690 h3.500 M900.500 696.500 h3.500 M900.500 619.700 h3.500 M900.500 765.900 h3.500" fill="none" stroke="#111111" stroke-width="0.9"/>
<rect x="898.5" y="609.8" width="2.4" height="2.4" fill="#111111"/>
<rect x="898.5" y="627.8" width="2.4" height="2.4" fill="#111111"/>
<rect x="898.5" y="755.8" width="2.4" height="2.4" fill="#111111"/>
<rect x="898.5" y="773.8" width="2.4" height="2.4" fill="#111111"/>
<path d="M1227 410.800 H1175 a4.500 4.500 0 0 0 -4.500 4.500 V446.200 a4.500 4.500 0 0 0 4.500 4.500 H1227" fill="none" stroke="#4a4a4a" stroke-width="5"/>
<path d="M1227 409 H1174 a6 6 0 0 0 -6 6 V446.500 a6 6 0 0 0 6 6 H1227" fill="none" stroke="#111111" stroke-width="2.4"/>
<path d="M1227 412.500 H1175 a3 3 0 0 0 -3 3 V446 a3 3 0 0 0 3 3 H1227" fill="none" stroke="#222" stroke-width="1.8"/>
<path d="M1214.700 411 V450.500 M1226.500 409 V452.500" fill="none" stroke="#111111" stroke-width="1"/>
<path d="M1226 421.500 H1199 a9.200 9.200 0 0 0 0 18.400 H1226" fill="none" stroke="#111111" stroke-width="1"/>
<path d="M1227 483.300 H1175 a4.500 4.500 0 0 0 -4.500 4.500 V518.700 a4.500 4.500 0 0 0 4.500 4.500 H1227" fill="none" stroke="#4a4a4a" stroke-width="5"/>
<path d="M1227 481.500 H1174 a6 6 0 0 0 -6 6 V519 a6 6 0 0 0 6 6 H1227" fill="none" stroke="#111111" stroke-width="2.4"/>
<path d="M1227 485 H1175 a3 3 0 0 0 -3 3 V518.500 a3 3 0 0 0 3 3 H1227" fill="none" stroke="#222" stroke-width="1.8"/>
<path d="M1212.500 483.500 V523 M1226.500 481.500 V525" fill="none" stroke="#111111" stroke-width="1"/>
<path d="M1226 493.200 H1199 a9.700 9.700 0 0 0 0 19.400 H1226" fill="none" stroke="#111111" stroke-width="1"/>
<circle cx="1207.8" cy="503.1" r="3.2" fill="none" stroke="#111111" stroke-width="1.6"/>
<circle cx="1220.3" cy="497.5" r="2.5" fill="none" stroke="#111111" stroke-width="1"/>
<circle cx="1220.3" cy="508.5" r="2.5" fill="none" stroke="#111111" stroke-width="1"/>
<path d="M1227.500 630 H1180 a4.500 4.500 0 0 0 -4.500 4.500 V700.500 a4.500 4.500 0 0 0 4.500 4.500 H1227.500" fill="none" stroke="#4a4a4a" stroke-width="5.4"/>
<path d="M1227.500 628 H1179 a6 6 0 0 0 -6 6 V701 a6 6 0 0 0 6 6 H1227.500" fill="none" stroke="#111111" stroke-width="2.2"/>
<path d="M1227.500 632.500 H1181 a3 3 0 0 0 -3 3 V699.500 a3 3 0 0 0 3 3 H1227.500" fill="none" stroke="#1a1a1a" stroke-width="1.6"/>
<path d="M1180.500 636 H1214.500 V699.500 H1180.500 M1227.500 628 V707" fill="none" stroke="#111111" stroke-width="1"/>
<circle cx="1221.2" cy="657" r="3" fill="none" stroke="#111111" stroke-width="1"/>
<circle cx="1221.2" cy="677" r="3" fill="none" stroke="#111111" stroke-width="1"/>
<path d="M1226 657 V677 M1217 657 V677" fill="none" stroke="#111111" stroke-width="1"/>
<circle cx="1209" cy="667" r="2.8" fill="none" stroke="#111111" stroke-width="1.2"/>
<rect x="1134" y="747" width="97.5" height="97" fill="#ffffff" stroke="#111111" stroke-width="1.9" rx="6"/>
<rect x="1138.2" y="751.3" width="89.3" height="88.5" fill="none" stroke="#111111" stroke-width="1" rx="4"/>
<rect x="1140.5" y="753.5" width="84.7" height="84" fill="none" stroke="#111111" stroke-width="0.8" rx="3"/>
<line x1="1152.5" y1="754" x2="1152.5" y2="837.5" stroke="#111111" stroke-width="1"/>
<line x1="1167.5" y1="754" x2="1167.5" y2="837.5" stroke="#111111" stroke-width="1"/>
<line x1="1182.8" y1="754" x2="1182.8" y2="837.5" stroke="#111111" stroke-width="1"/>
<line x1="1198" y1="754" x2="1198" y2="837.5" stroke="#111111" stroke-width="1"/>
<line x1="1213" y1="754" x2="1213" y2="837.5" stroke="#111111" stroke-width="1"/>
<path d="M1141 766.3 Q1183 768.64 1225 766.3" fill="none" stroke="#111111" stroke-width="1"/>
<path d="M1141 780.5 Q1183 781.7 1225 780.5" fill="none" stroke="#111111" stroke-width="1"/>
<path d="M1141 795.5 Q1183 795.5 1225 795.5" fill="none" stroke="#111111" stroke-width="1"/>
<path d="M1141 810.3 Q1183 809.12 1225 810.3" fill="none" stroke="#111111" stroke-width="1"/>
<path d="M1141 825.4 Q1183 823.01 1225 825.4" fill="none" stroke="#111111" stroke-width="1"/>
<circle cx="1213" cy="826" r="4.4" fill="#fff" stroke="#111111" stroke-width="1"/>
<circle cx="1213" cy="826" r="2.2" fill="none" stroke="#111111" stroke-width="0.8"/>
<circle cx="1139.5" cy="752.5" r="2.6" fill="#111111"/>
<circle cx="1226" cy="752.5" r="2.6" fill="#111111"/>
<circle cx="1139.5" cy="838.5" r="2.6" fill="#111111"/>
<circle cx="1226" cy="838.5" r="2.6" fill="#111111"/>
<rect x="1256.3" y="512.6" width="68.5" height="72.3" fill="#ffffff" stroke="#111111" stroke-width="1.8"/>
<rect x="1260.2" y="515.4" width="62.4" height="66.2" fill="none" stroke="#111111" stroke-width="1.3"/>
<path d="M1327.600 512 V586 M1332.400 512 V586" fill="none" stroke="#111111" stroke-width="2.6"/>
<rect x="1262.7" y="522.5" width="57.9" height="57.6" fill="none" stroke="#111111" stroke-width="1.1"/>
<path d="M1277.500 522.500 V580 M1291.700 522.500 V580 M1306.200 522.500 V580 M1262.700 536.700 H1320.600 M1262.700 551.400 H1320.600 M1262.700 565.700 H1320.600" fill="none" stroke="#111111" stroke-width="1.1"/>
<circle cx="1272.2" cy="519.3" r="1.9" fill="none" stroke="#111111" stroke-width="1"/>
<circle cx="1281" cy="519.3" r="1.9" fill="none" stroke="#111111" stroke-width="1"/>
<circle cx="1289.6" cy="519.3" r="1.9" fill="none" stroke="#111111" stroke-width="1"/>
<circle cx="1298.5" cy="519.3" r="1.9" fill="none" stroke="#111111" stroke-width="1"/>
<circle cx="1277.5" cy="536.7" r="4.3" fill="none" stroke="#111111" stroke-width="1.6"/>
<circle cx="1277.5" cy="536.7" r="2.2" fill="none" stroke="#111111" stroke-width="1"/>
<circle cx="1306.2" cy="536.7" r="2.8" fill="none" stroke="#111111" stroke-width="1.7"/>
<circle cx="1277.5" cy="565.7" r="4.3" fill="none" stroke="#111111" stroke-width="1.6"/>
<circle cx="1277.5" cy="565.7" r="2.2" fill="none" stroke="#111111" stroke-width="1"/>
<circle cx="1306.2" cy="565.7" r="6.2" fill="none" stroke="#111111" stroke-width="2.1"/>
<rect x="1256.5" y="662.5" width="73" height="146" fill="#ffffff" stroke="#111111" stroke-width="1.2"/>
<path d="M1261.500 662.500 V808.500 M1323 662.500 V808.500 M1326 662.500 V808.500" fill="none" stroke="#111111" stroke-width="1"/>
<path d="M1256.800 662.500 V808.500 M1328.600 662.500 V808.500" fill="none" stroke="#111111" stroke-width="2.3"/>
<line x1="1268" y1="667" x2="1268" y2="712" stroke="#111111" stroke-width="1"/>
<line x1="1271.7" y1="667" x2="1271.7" y2="712" stroke="#111111" stroke-width="1"/>
<line x1="1275.4" y1="667" x2="1275.4" y2="712" stroke="#111111" stroke-width="1"/>
<line x1="1279.1" y1="667" x2="1279.1" y2="712" stroke="#111111" stroke-width="1"/>
<line x1="1282.8" y1="667" x2="1282.8" y2="712" stroke="#111111" stroke-width="1"/>
<line x1="1286.5" y1="667" x2="1286.5" y2="712" stroke="#111111" stroke-width="1"/>
<line x1="1290.2" y1="667" x2="1290.2" y2="712" stroke="#111111" stroke-width="1"/>
<line x1="1293.9" y1="667" x2="1293.9" y2="712" stroke="#111111" stroke-width="1"/>
<line x1="1297.6" y1="667" x2="1297.6" y2="712" stroke="#111111" stroke-width="1"/>
<line x1="1301.3" y1="667" x2="1301.3" y2="712" stroke="#111111" stroke-width="1"/>
<line x1="1305" y1="667" x2="1305" y2="712" stroke="#111111" stroke-width="1"/>
<line x1="1308.7" y1="667" x2="1308.7" y2="712" stroke="#111111" stroke-width="1"/>
<line x1="1312.4" y1="667" x2="1312.4" y2="712" stroke="#111111" stroke-width="1"/>
<line x1="1316.1" y1="667" x2="1316.1" y2="712" stroke="#111111" stroke-width="1"/>
<rect x="1267.5" y="718.5" width="48.5" height="36.5" fill="none" stroke="#111111" stroke-width="1"/>
<circle cx="1274.4" cy="747.6" r="2.6" fill="none" stroke="#111111" stroke-width="1.4"/>
<rect x="1267.5" y="758.5" width="48.5" height="37" fill="none" stroke="#111111" stroke-width="1"/>
<circle cx="1274.4" cy="765.7" r="2.6" fill="none" stroke="#111111" stroke-width="1.4"/>
<rect x="1490.5" y="519.2" width="109.5" height="182.2" fill="#ffffff" stroke="#111111" stroke-width="1"/>
<circle cx="1493.3" cy="522.2" r="2" fill="none" stroke="#111111" stroke-width="0.8"/>
<circle cx="1597.2" cy="522.2" r="2" fill="none" stroke="#111111" stroke-width="0.8"/>
<circle cx="1493.3" cy="698.4" r="2" fill="none" stroke="#111111" stroke-width="0.8"/>
<circle cx="1597.2" cy="698.4" r="2" fill="none" stroke="#111111" stroke-width="0.8"/>
<rect x="1430" y="541.4" width="56" height="56" fill="#ffffff" stroke="#111111" stroke-width="1"/>
<rect x="1432" y="543.4" width="52" height="52" fill="none" stroke="#111111" stroke-width="0.8"/>
<rect x="1435.5" y="546.9" width="45" height="45" fill="url(#hatch)" stroke="#111111" stroke-width="1"/>
<circle cx="1433.6" cy="545" r="1.8" fill="#fff" stroke="#111111" stroke-width="0.8"/>
<circle cx="1482.4" cy="545" r="1.8" fill="#fff" stroke="#111111" stroke-width="0.8"/>
<circle cx="1433.6" cy="593.8" r="1.8" fill="#fff" stroke="#111111" stroke-width="0.8"/>
<circle cx="1482.4" cy="593.8" r="1.8" fill="#fff" stroke="#111111" stroke-width="0.8"/>
<rect x="1604.4" y="541.4" width="56" height="56" fill="#ffffff" stroke="#111111" stroke-width="1"/>
<rect x="1606.4" y="543.4" width="52" height="52" fill="none" stroke="#111111" stroke-width="0.8"/>
<rect x="1609.9" y="546.9" width="45" height="45" fill="url(#hatch)" stroke="#111111" stroke-width="1"/>
<circle cx="1608" cy="545" r="1.8" fill="#fff" stroke="#111111" stroke-width="0.8"/>
<circle cx="1656.8" cy="545" r="1.8" fill="#fff" stroke="#111111" stroke-width="0.8"/>
<circle cx="1608" cy="593.8" r="1.8" fill="#fff" stroke="#111111" stroke-width="0.8"/>
<circle cx="1656.8" cy="593.8" r="1.8" fill="#fff" stroke="#111111" stroke-width="0.8"/>
<rect x="1430" y="623.5" width="56" height="56" fill="#ffffff" stroke="#111111" stroke-width="1"/>
<rect x="1432" y="625.5" width="52" height="52" fill="none" stroke="#111111" stroke-width="0.8"/>
<rect x="1435.5" y="629" width="45" height="45" fill="url(#hatch)" stroke="#111111" stroke-width="1"/>
<circle cx="1433.6" cy="627.1" r="1.8" fill="#fff" stroke="#111111" stroke-width="0.8"/>
<circle cx="1482.4" cy="627.1" r="1.8" fill="#fff" stroke="#111111" stroke-width="0.8"/>
<circle cx="1433.6" cy="675.9" r="1.8" fill="#fff" stroke="#111111" stroke-width="0.8"/>
<circle cx="1482.4" cy="675.9" r="1.8" fill="#fff" stroke="#111111" stroke-width="0.8"/>
<rect x="1604.4" y="623.5" width="56" height="56" fill="#ffffff" stroke="#111111" stroke-width="1"/>
<rect x="1606.4" y="625.5" width="52" height="52" fill="none" stroke="#111111" stroke-width="0.8"/>
<rect x="1609.9" y="629" width="45" height="45" fill="url(#hatch)" stroke="#111111" stroke-width="1"/>
<circle cx="1608" cy="627.1" r="1.8" fill="#fff" stroke="#111111" stroke-width="0.8"/>
<circle cx="1656.8" cy="627.1" r="1.8" fill="#fff" stroke="#111111" stroke-width="0.8"/>
<circle cx="1608" cy="675.9" r="1.8" fill="#fff" stroke="#111111" stroke-width="0.8"/>
<circle cx="1656.8" cy="675.9" r="1.8" fill="#fff" stroke="#111111" stroke-width="0.8"/>
<rect x="1561.5" y="785.5" width="110.5" height="55.5" fill="#ffffff" stroke="#111111" stroke-width="1.2"/>
<line x1="1561.5" y1="789.5" x2="1672" y2="789.5" stroke="#111111" stroke-width="1"/>
<path d="M1612 784 l1.500 1.500 M1620 784 l-1.500 1.500 M1616 785.500 v2" fill="none" stroke="#111111" stroke-width="0.9"/>
<g opacity="0.999">
<text y="286.6" fill="#7f7f7f" stroke="#ffffff" font-size="35.6" transform="scale(0.8 1)"><tspan font-size="43" stroke-width="0.4" x="1349.65">C</tspan><tspan stroke-width="0" x="1382.29 1411.26 1438.89 1465.87 1481.01 1507.66 1535.62 1549.04">ORRIDOIO</tspan></text>
<text y="0" fill="#7f7f7f" stroke="#ffffff" font-size="35.6" transform="translate(824.6 0) rotate(-90) scale(0.8 1)"><tspan font-size="43" stroke-width="0.4" x="-884.97">C</tspan><tspan stroke-width="0" x="-847.69 -818.19 -784.94 -759.05 -727.63 -702.74">AMERA </tspan><tspan font-size="43" stroke-width="0.4" x="-677.84">I</tspan></text>
<text y="0" fill="#7f7f7f" stroke="#ffffff" font-size="35.6" transform="translate(1083 0) rotate(-90) scale(0.8 1)"><tspan font-size="43" stroke-width="0.4" x="-887.1">B</tspan><tspan stroke-width="0" x="-849.32 -823.71 -791.42 -764.46 -737.85">AGNO </tspan><tspan font-size="43" stroke-width="0.4" x="-711.25">2</tspan></text>
<text y="0" fill="#7f7f7f" stroke="#ffffff" font-size="35.6" transform="translate(1400.5 0) rotate(-90) scale(0.8 1)"><tspan font-size="43" stroke-width="0.4" x="-887.41">C</tspan><tspan stroke-width="0" x="-853.86 -826.24 -797.06 -783.36 -750.13">UCINA</tspan></text>
</g>
<text x="658.5" y="102.2" font-size="9.5" fill="#7ae5ef" textLength="23.4" lengthAdjust="spacingAndGlyphs" text-anchor="middle" font-family='"Liberation Sans", sans-serif' stroke="#7ae5ef" stroke-width="0.3">SS297</text>
<text x="692.5" y="102.2" font-size="9.5" fill="#7ae5ef" textLength="23.4" lengthAdjust="spacingAndGlyphs" text-anchor="middle" font-family='"Liberation Sans", sans-serif' stroke="#7ae5ef" stroke-width="0.3">SS298</text>
<text x="726" y="102.2" font-size="9.5" fill="#7ae5ef" textLength="23.4" lengthAdjust="spacingAndGlyphs" text-anchor="middle" font-family='"Liberation Sans", sans-serif' stroke="#7ae5ef" stroke-width="0.3">XS299</text>
<text x="760" y="102.2" font-size="9.5" fill="#7ae5ef" textLength="23.4" lengthAdjust="spacingAndGlyphs" text-anchor="middle" font-family='"Liberation Sans", sans-serif' stroke="#7ae5ef" stroke-width="0.3">XS300</text>
<rect x="595.3" y="149.4" width="34.5" height="34.2" fill="none" stroke="#111111" stroke-width="1"/>
<path d="M606.8 161 l11.400 11.400 M618.2 161 l-11.400 11.400" fill="none" stroke="#111111" stroke-width="1.2"/>
<text x="612.5" y="148" font-size="7.8" fill="#1c1cd8" textLength="21" lengthAdjust="spacingAndGlyphs" text-anchor="middle" font-weight="bold" font-family='"Liberation Sans", sans-serif'>h = 270</text>
<text x="612.5" y="194" font-size="10.6" fill="#7ae5ef" textLength="21.5" lengthAdjust="spacingAndGlyphs" text-anchor="middle" font-family='"Liberation Sans", sans-serif' stroke="#7ae5ef" stroke-width="0.3">EL208</text>
<rect x="638.45" y="147.05" width="39.2" height="38" fill="none" stroke="#f3f345" stroke-width="1.7"/>
<rect x="639.8" y="148.4" width="36.5" height="35.3" fill="none" stroke="#2a2a2a" stroke-width="1.1"/>
<circle cx="649" cy="165.4" r="4.1" fill="none" stroke="#111111" stroke-width="1.1"/>
<path d="M651.8 160.9 l2.500 -4.700 l2.800 1.400 M646.2 160.9 l-2.500 -4.500 l-2.800 1.200 M646.2 169.9 l-2.800 4.700 l-2 -0.800 M651.8 169.9 l2.800 5 l2.300 -1.400" fill="none" stroke="#111111" stroke-width="1.1"/>
<circle cx="663.8" cy="171.8" r="4.6" fill="none" stroke="#111111" stroke-width="1.1"/>
<path d="M669.4 171.8 L671.6 171.8 M667.76 175.76 L669.32 177.32 M663.8 177.4 L663.8 179.6 M659.84 175.76 L658.28 177.32 M658.2 171.8 L656 171.8 M659.84 167.84 L658.28 166.28 M667.76 167.84 L669.32 166.28" fill="none" stroke="#111111" stroke-width="1"/>
<rect x="661.6" y="164.2" width="4.4" height="3" fill="none" stroke="#111111" stroke-width="1"/>
<text x="657.5" y="193.2" font-size="9.5" fill="#7ae5ef" textLength="24" lengthAdjust="spacingAndGlyphs" text-anchor="middle" font-family='"Liberation Sans", sans-serif' stroke="#7ae5ef" stroke-width="0.3">SS248</text>
<rect x="684.45" y="148.05" width="71.9" height="37" fill="none" stroke="#f3f345" stroke-width="1.7"/>
<rect x="685.8" y="149.4" width="69.2" height="34.3" fill="none" stroke="#2a2a2a" stroke-width="1.1"/>
<line x1="719.7" y1="149.4" x2="719.7" y2="183.7" stroke="#111111" stroke-width="1.1"/>
<path d="M702.75 156.6 v8.800 M697.95 165.4 h9.600 M698.45 169.6 c0 -4.800 8.600 -4.800 8.600 0" fill="none" stroke="#111111" stroke-width="1.15"/>
<text x="702.75" y="179.2" font-size="10.4" fill="#111111" textLength="12" lengthAdjust="spacingAndGlyphs" text-anchor="middle" font-weight="bold" font-family='"Liberation Sans", sans-serif'>16A</text>
<text x="733" y="180.5" font-size="6.5" fill="#111111" textLength="8" lengthAdjust="spacingAndGlyphs" font-weight="bold" font-family='"Liberation Sans", sans-serif'>16A</text>
<path d="M745 168 v5 M741 173 h8 M741.500 178 c0 -5 7 -5 7 0" fill="none" stroke="#111111" stroke-width="1"/>
<circle cx="738" cy="171" r="3" fill="none" stroke="#111111" stroke-width="1"/>
<text x="703.5" y="193.2" font-size="9.5" fill="#7ae5ef" textLength="24" lengthAdjust="spacingAndGlyphs" text-anchor="middle" font-family='"Liberation Sans", sans-serif' stroke="#7ae5ef" stroke-width="0.3">XS280</text>
<text x="738.5" y="193.2" font-size="9.5" fill="#7ae5ef" textLength="24" lengthAdjust="spacingAndGlyphs" text-anchor="middle" font-family='"Liberation Sans", sans-serif' stroke="#7ae5ef" stroke-width="0.3">XS279</text>
<text x="680" y="154.9" font-size="9.5" fill="#7ae5ef" textLength="33.5" lengthAdjust="spacingAndGlyphs" font-family='"Liberation Sans", sans-serif' stroke="#7ae5ef" stroke-width="0.3">BOX207</text>
<text x="680" y="166.5" font-size="9.6" fill="#111111" textLength="82" lengthAdjust="spacingAndGlyphs" font-family='"Liberation Sans", sans-serif' stroke="#111111" stroke-width="0.55">Accensione Luce Specchio</text>
<text x="680" y="185.3" font-size="9.6" fill="#66e02c" textLength="24.5" lengthAdjust="spacingAndGlyphs" font-weight="bold" font-family='"Liberation Sans", sans-serif'>h = 100</text>
<text x="763.5" y="154.9" font-size="9.5" fill="#7ae5ef" textLength="32" lengthAdjust="spacingAndGlyphs" font-family='"Liberation Sans", sans-serif' stroke="#7ae5ef" stroke-width="0.3">BOX185</text>
<text x="763.5" y="185.3" font-size="9.6" fill="#66e02c" textLength="24" lengthAdjust="spacingAndGlyphs" font-weight="bold" font-family='"Liberation Sans", sans-serif'>h = 100</text>
<text x="762" y="167.1" font-size="9.6" fill="#111111" textLength="54.5" lengthAdjust="spacingAndGlyphs" font-family='"Liberation Sans", sans-serif' stroke="#111111" stroke-width="0.55">Presa Specchio</text>
<rect x="790.45" y="178.05" width="37.8" height="37" fill="none" stroke="#f3f345" stroke-width="1.7"/>
<rect x="791.8" y="179.4" width="35.1" height="34.3" fill="none" stroke="#2a2a2a" stroke-width="1.1"/>
<circle cx="801" cy="196.4" r="4.1" fill="none" stroke="#111111" stroke-width="1.1"/>
<path d="M803.8 191.9 l2.500 -4.700 l2.800 1.400 M798.2 191.9 l-2.500 -4.500 l-2.800 1.200 M798.2 200.9 l-2.800 4.700 l-2 -0.800 M803.8 200.9 l2.800 5 l2.300 -1.400" fill="none" stroke="#111111" stroke-width="1.1"/>
<circle cx="815.8" cy="202.8" r="4.6" fill="none" stroke="#111111" stroke-width="1.1"/>
<path d="M821.4 202.8 L823.6 202.8 M819.76 206.76 L821.32 208.32 M815.8 208.4 L815.8 210.6 M811.84 206.76 L810.28 208.32 M810.2 202.8 L808 202.8 M811.84 198.84 L810.28 197.28 M819.76 198.84 L821.32 197.28" fill="none" stroke="#111111" stroke-width="1"/>
<rect x="813.6" y="195.2" width="4.4" height="3" fill="none" stroke="#111111" stroke-width="1"/>
<text x="810" y="223.7" font-size="9.5" fill="#7ae5ef" textLength="23.5" lengthAdjust="spacingAndGlyphs" text-anchor="middle" font-family='"Liberation Sans", sans-serif' stroke="#7ae5ef" stroke-width="0.3">SS247</text>
<text x="831.8" y="185.1" font-size="9.5" fill="#7ae5ef" textLength="32.5" lengthAdjust="spacingAndGlyphs" font-family='"Liberation Sans", sans-serif' stroke="#7ae5ef" stroke-width="0.3">BOX179</text>
<text x="831.8" y="196.7" font-size="9.6" fill="#111111" textLength="58.5" lengthAdjust="spacingAndGlyphs" font-family='"Liberation Sans", sans-serif' stroke="#111111" stroke-width="0.55">Accensione Luce</text>
<text x="831.8" y="215.5" font-size="9.6" fill="#66e02c" textLength="24.5" lengthAdjust="spacingAndGlyphs" font-weight="bold" font-family='"Liberation Sans", sans-serif'>h = 100</text>
<rect x="656" y="240.4" width="34.5" height="34.2" fill="none" stroke="#111111" stroke-width="1"/>
<path d="M667.5 252 l11.400 11.400 M678.9 252 l-11.400 11.400" fill="none" stroke="#111111" stroke-width="1.2"/>
<text x="673.2" y="239" font-size="7.8" fill="#1c1cd8" textLength="21" lengthAdjust="spacingAndGlyphs" text-anchor="middle" font-weight="bold" font-family='"Liberation Sans", sans-serif'>h = 270</text>
<text x="673.2" y="285" font-size="10.6" fill="#7ae5ef" textLength="21.5" lengthAdjust="spacingAndGlyphs" text-anchor="middle" font-family='"Liberation Sans", sans-serif' stroke="#7ae5ef" stroke-width="0.3">EL207</text>
<rect x="760.35" y="315.05" width="38.1" height="36.8" fill="none" stroke="#f3f345" stroke-width="1.7"/>
<rect x="761.7" y="316.4" width="35.4" height="34.1" fill="none" stroke="#2a2a2a" stroke-width="1.1"/>
<path d="M779.4 323.6 v9 M770.6 336.8 h3.600 q0.700 -4.100 2.100 -4.400 h6.200 q1.400 0.300 2.100 4.400 h3.600" fill="none" stroke="#111111" stroke-width="1.1"/>
<text x="779.4" y="346.2" font-size="10.4" fill="#111111" textLength="27.3" lengthAdjust="spacingAndGlyphs" text-anchor="middle" font-weight="bold" font-family='"Liberation Sans", sans-serif'>SCHUKO</text>
<text x="779.2" y="360.2" font-size="9.5" fill="#7ae5ef" textLength="23.5" lengthAdjust="spacingAndGlyphs" text-anchor="middle" font-family='"Liberation Sans", sans-serif' stroke="#7ae5ef" stroke-width="0.3">XS281</text>
<text x="801.7" y="320.9" font-size="9.5" fill="#7ae5ef" textLength="32" lengthAdjust="spacingAndGlyphs" font-family='"Liberation Sans", sans-serif' stroke="#7ae5ef" stroke-width="0.3">BOX190</text>
<text x="801.7" y="332.5" font-size="9.6" fill="#111111" textLength="56.5" lengthAdjust="spacingAndGlyphs" font-family='"Liberation Sans", sans-serif' stroke="#111111" stroke-width="0.55">Presa Lavatrice</text>
<text x="801.7" y="351.3" font-size="9.6" fill="#66e02c" textLength="21.5" lengthAdjust="spacingAndGlyphs" font-weight="bold" font-family='"Liberation Sans", sans-serif'>h = 50</text>
<rect x="942.85" y="118.55" width="70.7" height="36" fill="none" stroke="#f3f345" stroke-width="1.7"/>
<rect x="944.2" y="119.9" width="68" height="33.3" fill="none" stroke="#2a2a2a" stroke-width="1.1"/>
<line x1="978" y1="119.9" x2="978" y2="153.2" stroke="#111111" stroke-width="1.1"/>
<path d="M961.1 127.1 v8.800 M956.3 135.9 h9.600 M956.8 140.1 c0 -4.800 8.600 -4.800 8.600 0" fill="none" stroke="#111111" stroke-width="1.15"/>
<text x="961.1" y="149.7" font-size="10.4" fill="#111111" textLength="23" lengthAdjust="spacingAndGlyphs" text-anchor="middle" font-weight="bold" font-family='"Liberation Sans", sans-serif'>10/16A</text>
<path d="M995.1 127.1 v8.800 M990.3 135.9 h9.600 M990.8 140.1 c0 -4.800 8.600 -4.800 8.600 0" fill="none" stroke="#111111" stroke-width="1.15"/>
<text x="995.1" y="149.7" font-size="10.4" fill="#111111" textLength="23" lengthAdjust="spacingAndGlyphs" text-anchor="middle" font-weight="bold" font-family='"Liberation Sans", sans-serif'>10/16A</text>
<text x="961.2" y="162.7" font-size="9.5" fill="#7ae5ef" textLength="19.5" lengthAdjust="spacingAndGlyphs" text-anchor="middle" font-family='"Liberation Sans", sans-serif' stroke="#7ae5ef" stroke-width="0.3">XS32</text>
<text x="995.3" y="162.7" font-size="9.5" fill="#7ae5ef" textLength="19.5" lengthAdjust="spacingAndGlyphs" text-anchor="middle" font-family='"Liberation Sans", sans-serif' stroke="#7ae5ef" stroke-width="0.3">XS33</text>
<text x="1021.3" y="124.4" font-size="9.5" fill="#7ae5ef" textLength="27.5" lengthAdjust="spacingAndGlyphs" font-family='"Liberation Sans", sans-serif' stroke="#7ae5ef" stroke-width="0.3">BOX29</text>
<text x="1021.3" y="136" font-size="9.6" fill="#111111" textLength="57" lengthAdjust="spacingAndGlyphs" font-family='"Liberation Sans", sans-serif' stroke="#111111" stroke-width="0.55">Prese Servizio 1</text>
<text x="1021.3" y="154.8" font-size="9.6" fill="#66e02c" textLength="21" lengthAdjust="spacingAndGlyphs" font-weight="bold" font-family='"Liberation Sans", sans-serif'>h = 30</text>
<rect x="867.55" y="178.55" width="36.4" height="36.8" fill="none" stroke="#f3f345" stroke-width="1.7"/>
<rect x="868.9" y="179.9" width="33.7" height="34.1" fill="none" stroke="#2a2a2a" stroke-width="1.1"/>
<circle cx="885.75" cy="197.35" r="6.8" fill="none" stroke="#111111" stroke-width="1"/>
<circle cx="885.75" cy="197.35" r="3.4" fill="none" stroke="#111111" stroke-width="1"/>
<text x="885.6" y="223.7" font-size="9.5" fill="#7ae5ef" textLength="18.7" lengthAdjust="spacingAndGlyphs" text-anchor="middle" font-family='"Liberation Sans", sans-serif' stroke="#7ae5ef" stroke-width="0.3">SB20</text>
<text x="907.8" y="185.1" font-size="9.5" fill="#7ae5ef" textLength="27" lengthAdjust="spacingAndGlyphs" font-family='"Liberation Sans", sans-serif' stroke="#7ae5ef" stroke-width="0.3">BOX17</text>
<text x="907.8" y="196.7" font-size="9.6" fill="#111111" textLength="64.7" lengthAdjust="spacingAndGlyphs" font-family='"Liberation Sans", sans-serif' stroke="#111111" stroke-width="0.55">Accensione Luce 3</text>
<text x="907.8" y="215.5" font-size="9.6" fill="#66e02c" textLength="24.2" lengthAdjust="spacingAndGlyphs" font-weight="bold" font-family='"Liberation Sans", sans-serif'>h = 100</text>
<rect x="928.7" y="225.2" width="34.5" height="34.2" fill="none" stroke="#111111" stroke-width="1"/>
<path d="M940.2 236.8 l11.400 11.400 M951.6 236.8 l-11.400 11.400" fill="none" stroke="#111111" stroke-width="1.2"/>
<text x="945.9" y="223.8" font-size="7.8" fill="#1c1cd8" textLength="14" lengthAdjust="spacingAndGlyphs" text-anchor="middle" font-weight="bold" font-family='"Liberation Sans", sans-serif'>h = 0</text>
<text x="945.9" y="269.8" font-size="10.6" fill="#7ae5ef" textLength="18.5" lengthAdjust="spacingAndGlyphs" text-anchor="middle" font-family='"Liberation Sans", sans-serif' stroke="#7ae5ef" stroke-width="0.3">EL47</text>
<rect x="972.95" y="315.05" width="37.2" height="36.5" fill="none" stroke="#f3f345" stroke-width="1.7"/>
<rect x="974.3" y="316.4" width="34.5" height="33.8" fill="none" stroke="#2a2a2a" stroke-width="1.1"/>
<circle cx="991.55" cy="333.7" r="6.8" fill="none" stroke="#111111" stroke-width="1"/>
<circle cx="991.55" cy="333.7" r="3.4" fill="none" stroke="#111111" stroke-width="1"/>
<text x="991.3" y="359.7" font-size="9.5" fill="#7ae5ef" textLength="18" lengthAdjust="spacingAndGlyphs" text-anchor="middle" font-family='"Liberation Sans", sans-serif' stroke="#7ae5ef" stroke-width="0.3">SB14</text>
<text x="1014.3" y="320.9" font-size="9.5" fill="#7ae5ef" textLength="26" lengthAdjust="spacingAndGlyphs" font-family='"Liberation Sans", sans-serif' stroke="#7ae5ef" stroke-width="0.3">BOX11</text>
<text x="1014.3" y="332.5" font-size="9.6" fill="#111111" textLength="64" lengthAdjust="spacingAndGlyphs" font-family='"Liberation Sans", sans-serif' stroke="#111111" stroke-width="0.55">Accensione Luce 2</text>
<text x="1014.3" y="351.3" font-size="9.6" fill="#66e02c" textLength="24.3" lengthAdjust="spacingAndGlyphs" font-weight="bold" font-family='"Liberation Sans", sans-serif'>h = 100</text>
<rect x="1291.25" y="72.55" width="36.9" height="36.3" fill="none" stroke="#f3f345" stroke-width="1.7"/>
<rect x="1292.6" y="73.9" width="34.2" height="33.6" fill="none" stroke="#2a2a2a" stroke-width="1.1"/>
<path d="M1309.7 81.1 v8.800 M1304.9 89.9 h9.600 M1305.4 94.1 c0 -4.800 8.600 -4.800 8.600 0" fill="none" stroke="#111111" stroke-width="1.15"/>
<text x="1309.7" y="103.7" font-size="10.4" fill="#111111" textLength="23" lengthAdjust="spacingAndGlyphs" text-anchor="middle" font-weight="bold" font-family='"Liberation Sans", sans-serif'>10/16A</text>
<text x="1333" y="109" font-size="9.6" fill="#66e02c" textLength="21.5" lengthAdjust="spacingAndGlyphs" font-weight="bold" font-family='"Liberation Sans", sans-serif'>h = 30</text>
<text x="1310" y="117.7" font-size="9.5" fill="#7ae5ef" textLength="24" lengthAdjust="spacingAndGlyphs" text-anchor="middle" font-family='"Liberation Sans", sans-serif' stroke="#7ae5ef" stroke-width="0.3">XS385</text>
<rect x="1397.45" y="88.05" width="71.2" height="36" fill="none" stroke="#f3f345" stroke-width="1.7"/>
<rect x="1398.8" y="89.4" width="68.5" height="33.3" fill="none" stroke="#2a2a2a" stroke-width="1.1"/>
<line x1="1433" y1="89.4" x2="1433" y2="122.7" stroke="#111111" stroke-width="1.1"/>
<path d="M1415.9 96.6 v8.800 M1411.1 105.4 h9.600 M1411.6 109.6 c0 -4.800 8.600 -4.800 8.600 0" fill="none" stroke="#111111" stroke-width="1.15"/>
<text x="1415.9" y="119.2" font-size="10.4" fill="#111111" textLength="23" lengthAdjust="spacingAndGlyphs" text-anchor="middle" font-weight="bold" font-family='"Liberation Sans", sans-serif'>10/16A</text>
<path d="M1450.15 96.6 v9 M1441.35 109.8 h3.600 q0.700 -4.100 2.100 -4.400 h6.200 q1.400 0.300 2.100 4.400 h3.600" fill="none" stroke="#111111" stroke-width="1.1"/>
<text x="1450.15" y="119.2" font-size="10.4" fill="#111111" textLength="27.3" lengthAdjust="spacingAndGlyphs" text-anchor="middle" font-weight="bold" font-family='"Liberation Sans", sans-serif'>SCHUKO</text>
<text x="1476" y="105.8" font-size="9.6" fill="#111111" textLength="57.5" lengthAdjust="spacingAndGlyphs" font-family='"Liberation Sans", sans-serif' stroke="#111111" stroke-width="0.55">Prese Servizio 1</text>
<text x="1476" y="125" font-size="9.6" fill="#66e02c" textLength="21.5" lengthAdjust="spacingAndGlyphs" font-weight="bold" font-family='"Liberation Sans", sans-serif'>h = 30</text>
<text x="1416" y="131.7" font-size="9.5" fill="#7ae5ef" textLength="19.5" lengthAdjust="spacingAndGlyphs" text-anchor="middle" font-family='"Liberation Sans", sans-serif' stroke="#7ae5ef" stroke-width="0.3">XS94</text>
<text x="1450" y="131.7" font-size="9.5" fill="#7ae5ef" textLength="19.5" lengthAdjust="spacingAndGlyphs" text-anchor="middle" font-family='"Liberation Sans", sans-serif' stroke="#7ae5ef" stroke-width="0.3">XS95</text>
<rect x="1398.7" y="134.6" width="34.5" height="34.2" fill="none" stroke="#111111" stroke-width="1"/>
<path d="M1410.2 146.2 l11.400 11.400 M1421.6 146.2 l-11.400 11.400" fill="none" stroke="#111111" stroke-width="1.2"/>
<text x="1415.9" y="133.2" font-size="7.8" fill="#1c1cd8" textLength="21" lengthAdjust="spacingAndGlyphs" text-anchor="middle" font-weight="bold" font-family='"Liberation Sans", sans-serif'>h = 270</text>
<text x="1415.9" y="179.2" font-size="10.6" fill="#7ae5ef" textLength="21.5" lengthAdjust="spacingAndGlyphs" text-anchor="middle" font-family='"Liberation Sans", sans-serif' stroke="#7ae5ef" stroke-width="0.3">EL108</text>
<rect x="1397.15" y="178.55" width="72" height="36" fill="none" stroke="#f3f345" stroke-width="1.7"/>
<rect x="1398.5" y="179.9" width="69.3" height="33.3" fill="none" stroke="#2a2a2a" stroke-width="1.1"/>
<line x1="1433" y1="179.9" x2="1433" y2="213.2" stroke="#111111" stroke-width="1.1"/>
<circle cx="1415.75" cy="196.95" r="6.8" fill="none" stroke="#111111" stroke-width="1"/>
<circle cx="1415.75" cy="196.95" r="3.4" fill="none" stroke="#111111" stroke-width="1"/>
<circle cx="1450.4" cy="196.95" r="6.8" fill="none" stroke="#111111" stroke-width="1"/>
<circle cx="1450.4" cy="196.95" r="3.4" fill="none" stroke="#111111" stroke-width="1"/>
<text x="1416" y="222.7" font-size="9.5" fill="#7ae5ef" textLength="19" lengthAdjust="spacingAndGlyphs" text-anchor="middle" font-family='"Liberation Sans", sans-serif' stroke="#7ae5ef" stroke-width="0.3">SB59</text>
<text x="1450" y="222.7" font-size="9.5" fill="#7ae5ef" textLength="19" lengthAdjust="spacingAndGlyphs" text-anchor="middle" font-family='"Liberation Sans", sans-serif' stroke="#7ae5ef" stroke-width="0.3">SB60</text>
<text x="1476" y="184.9" font-size="9.5" fill="#7ae5ef" textLength="27" lengthAdjust="spacingAndGlyphs" font-family='"Liberation Sans", sans-serif' stroke="#7ae5ef" stroke-width="0.3">BOX58</text>
<text x="1476" y="196.5" font-size="9.6" fill="#111111" textLength="64" lengthAdjust="spacingAndGlyphs" font-family='"Liberation Sans", sans-serif' stroke="#111111" stroke-width="0.55">Accensione Luce 4</text>
<text x="1476" y="215.3" font-size="9.6" fill="#66e02c" textLength="24.3" lengthAdjust="spacingAndGlyphs" font-weight="bold" font-family='"Liberation Sans", sans-serif'>h = 100</text>
<rect x="1291.25" y="224.05" width="71.4" height="36.9" fill="none" stroke="#f3f345" stroke-width="1.7"/>
<rect x="1292.6" y="225.4" width="68.7" height="34.2" fill="none" stroke="#2a2a2a" stroke-width="1.1"/>
<line x1="1326.5" y1="225.4" x2="1326.5" y2="259.6" stroke="#111111" stroke-width="1.1"/>
<circle cx="1309.55" cy="242.9" r="6.8" fill="none" stroke="#111111" stroke-width="1"/>
<circle cx="1309.55" cy="242.9" r="3.4" fill="none" stroke="#111111" stroke-width="1"/>
<rect x="1335" y="238" width="18" height="9.5" fill="none" stroke="#111111" stroke-width="1.1"/>
<path d="M1344 229.500 V238 M1344 247.500 V255" fill="none" stroke="#111111" stroke-width="1.1"/>
<text x="1309.7" y="268.7" font-size="9.5" fill="#7ae5ef" textLength="14" lengthAdjust="spacingAndGlyphs" text-anchor="middle" font-family='"Liberation Sans", sans-serif' stroke="#7ae5ef" stroke-width="0.3">SB8</text>
<text x="1343.5" y="268.7" font-size="9.5" fill="#7ae5ef" textLength="19.5" lengthAdjust="spacingAndGlyphs" text-anchor="middle" font-family='"Liberation Sans", sans-serif' stroke="#7ae5ef" stroke-width="0.3">K209</text>
<text x="1369.7" y="230.9" font-size="9.5" fill="#7ae5ef" textLength="23.8" lengthAdjust="spacingAndGlyphs" font-family='"Liberation Sans", sans-serif' stroke="#7ae5ef" stroke-width="0.3">BOX5</text>
<text x="1369.7" y="242.5" font-size="9.6" fill="#111111" textLength="64" lengthAdjust="spacingAndGlyphs" font-family='"Liberation Sans", sans-serif' stroke="#111111" stroke-width="0.55">Accensione Luce 1</text>
<text x="1369.7" y="261.3" font-size="9.6" fill="#66e02c" textLength="24.3" lengthAdjust="spacingAndGlyphs" font-weight="bold" font-family='"Liberation Sans", sans-serif'>h = 100</text>
<rect x="1291.25" y="315.05" width="71.4" height="36.5" fill="none" stroke="#f3f345" stroke-width="1.7"/>
<rect x="1292.6" y="316.4" width="68.7" height="33.8" fill="none" stroke="#2a2a2a" stroke-width="1.1"/>
<line x1="1326.5" y1="316.4" x2="1326.5" y2="350.2" stroke="#111111" stroke-width="1.1"/>
<path d="M1309.55 323.6 v8.800 M1304.75 332.4 h9.600 M1305.25 336.6 c0 -4.800 8.600 -4.800 8.600 0" fill="none" stroke="#111111" stroke-width="1.15"/>
<text x="1309.55" y="346.2" font-size="10.4" fill="#111111" textLength="23" lengthAdjust="spacingAndGlyphs" text-anchor="middle" font-weight="bold" font-family='"Liberation Sans", sans-serif'>10/16A</text>
<path d="M1343.9 323.6 v8.800 M1339.1 332.4 h9.600 M1339.6 336.6 c0 -4.800 8.600 -4.800 8.600 0" fill="none" stroke="#111111" stroke-width="1.15"/>
<text x="1343.9" y="346.2" font-size="10.4" fill="#111111" textLength="23" lengthAdjust="spacingAndGlyphs" text-anchor="middle" font-weight="bold" font-family='"Liberation Sans", sans-serif'>10/16A</text>
<text x="1309.7" y="359.7" font-size="9.5" fill="#7ae5ef" textLength="19.5" lengthAdjust="spacingAndGlyphs" text-anchor="middle" font-family='"Liberation Sans", sans-serif' stroke="#7ae5ef" stroke-width="0.3">XS38</text>
<text x="1343.5" y="359.7" font-size="9.5" fill="#7ae5ef" textLength="19.5" lengthAdjust="spacingAndGlyphs" text-anchor="middle" font-family='"Liberation Sans", sans-serif' stroke="#7ae5ef" stroke-width="0.3">XS39</text>
<text x="1369.7" y="320.9" font-size="9.5" fill="#7ae5ef" textLength="28.3" lengthAdjust="spacingAndGlyphs" font-family='"Liberation Sans", sans-serif' stroke="#7ae5ef" stroke-width="0.3">BOX35</text>
<text x="1369.7" y="332.5" font-size="9.6" fill="#111111" textLength="59" lengthAdjust="spacingAndGlyphs" font-family='"Liberation Sans", sans-serif' stroke="#111111" stroke-width="0.55">Prese Servizio 2</text>
<text x="1369.7" y="351.3" font-size="9.6" fill="#66e02c" textLength="21.5" lengthAdjust="spacingAndGlyphs" font-weight="bold" font-family='"Liberation Sans", sans-serif'>h = 30</text>
<rect x="473.85" y="406.05" width="137.5" height="36" fill="none" stroke="#f3f345" stroke-width="1.7"/>
<rect x="475.2" y="407.4" width="134.8" height="33.3" fill="none" stroke="#2a2a2a" stroke-width="1.1"/>
<line x1="508.3" y1="407.4" x2="508.3" y2="440.7" stroke="#111111" stroke-width="1.1"/>
<line x1="542.3" y1="407.4" x2="542.3" y2="440.7" stroke="#111111" stroke-width="1.1"/>
<line x1="576.6" y1="407.4" x2="576.6" y2="440.7" stroke="#111111" stroke-width="1.1"/>
<circle cx="484.4" cy="424.4" r="4.1" fill="none" stroke="#111111" stroke-width="1.1"/>
<path d="M487.2 419.9 l2.500 -4.700 l2.800 1.400 M481.6 419.9 l-2.500 -4.500 l-2.800 1.200 M481.6 428.9 l-2.800 4.700 l-2 -0.800 M487.2 428.9 l2.800 5 l2.300 -1.400" fill="none" stroke="#111111" stroke-width="1.1"/>
<circle cx="499.2" cy="430.8" r="4.6" fill="none" stroke="#111111" stroke-width="1.1"/>
<path d="M504.8 430.8 L507 430.8 M503.16 434.76 L504.72 436.32 M499.2 436.4 L499.2 438.6 M495.24 434.76 L493.68 436.32 M493.6 430.8 L491.4 430.8 M495.24 426.84 L493.68 425.28 M503.16 426.84 L504.72 425.28" fill="none" stroke="#111111" stroke-width="1"/>
<rect x="497" y="423.2" width="4.4" height="3" fill="none" stroke="#111111" stroke-width="1"/>
<circle cx="517.5" cy="424.4" r="4.1" fill="none" stroke="#111111" stroke-width="1.1"/>
<path d="M520.3 419.9 l2.500 -4.700 l2.800 1.400 M514.7 419.9 l-2.500 -4.500 l-2.800 1.200 M514.7 428.9 l-2.800 4.700 l-2 -0.800 M520.3 428.9 l2.800 5 l2.300 -1.400" fill="none" stroke="#111111" stroke-width="1.1"/>
<circle cx="532.3" cy="430.8" r="4.6" fill="none" stroke="#111111" stroke-width="1.1"/>
<path d="M537.9 430.8 L540.1 430.8 M536.26 434.76 L537.82 436.32 M532.3 436.4 L532.3 438.6 M528.34 434.76 L526.78 436.32 M526.7 430.8 L524.5 430.8 M528.34 426.84 L526.78 425.28 M536.26 426.84 L537.82 425.28" fill="none" stroke="#111111" stroke-width="1"/>
<rect x="530.1" y="423.2" width="4.4" height="3" fill="none" stroke="#111111" stroke-width="1"/>
<path d="M559.45 414.6 v8.800 M554.65 423.4 h9.600 M555.15 427.6 c0 -4.800 8.600 -4.800 8.600 0" fill="none" stroke="#111111" stroke-width="1.15"/>
<text x="559.45" y="437.2" font-size="10.4" fill="#111111" textLength="23" lengthAdjust="spacingAndGlyphs" text-anchor="middle" font-weight="bold" font-family='"Liberation Sans", sans-serif'>10/16A</text>
<path d="M593.3 414.6 v8.800 M588.5 423.4 h9.600 M589 427.6 c0 -4.800 8.600 -4.800 8.600 0" fill="none" stroke="#111111" stroke-width="1.15"/>
<text x="593.3" y="437.2" font-size="10.4" fill="#111111" textLength="23" lengthAdjust="spacingAndGlyphs" text-anchor="middle" font-weight="bold" font-family='"Liberation Sans", sans-serif'>10/16A</text>
<text x="492.5" y="450.2" font-size="9.5" fill="#7ae5ef" textLength="24" lengthAdjust="spacingAndGlyphs" text-anchor="middle" font-family='"Liberation Sans", sans-serif' stroke="#7ae5ef" stroke-width="0.3">SS243</text>
<text x="525" y="450.2" font-size="9.5" fill="#7ae5ef" textLength="24" lengthAdjust="spacingAndGlyphs" text-anchor="middle" font-family='"Liberation Sans", sans-serif' stroke="#7ae5ef" stroke-width="0.3">SS244</text>
<text x="559.2" y="450.2" font-size="9.5" fill="#7ae5ef" textLength="22" lengthAdjust="spacingAndGlyphs" text-anchor="middle" font-family='"Liberation Sans", sans-serif' stroke="#7ae5ef" stroke-width="0.3">XS155</text>
<text x="593.3" y="450.2" font-size="9.5" fill="#7ae5ef" textLength="22.3" lengthAdjust="spacingAndGlyphs" text-anchor="middle" font-family='"Liberation Sans", sans-serif' stroke="#7ae5ef" stroke-width="0.3">XS156</text>
<text x="626" y="412.2" font-size="9.5" fill="#7ae5ef" textLength="32" lengthAdjust="spacingAndGlyphs" font-family='"Liberation Sans", sans-serif' stroke="#7ae5ef" stroke-width="0.3">BOX150</text>
<text x="626" y="423.8" font-size="9.6" fill="#111111" textLength="90" lengthAdjust="spacingAndGlyphs" font-family='"Liberation Sans", sans-serif' stroke="#111111" stroke-width="0.55">Accensione Luce 1 (Letto)</text>
<text x="626" y="442.6" font-size="9.6" fill="#66e02c" textLength="21.7" lengthAdjust="spacingAndGlyphs" font-weight="bold" font-family='"Liberation Sans", sans-serif'>h = 50</text>
<rect x="790.45" y="390.75" width="37.8" height="36.6" fill="none" stroke="#f3f345" stroke-width="1.7"/>
<rect x="791.8" y="392.1" width="35.1" height="33.9" fill="none" stroke="#2a2a2a" stroke-width="1.1"/>
<path d="M809.35 399.3 v8.800 M804.55 408.1 h9.600 M805.05 412.3 c0 -4.800 8.600 -4.800 8.600 0" fill="none" stroke="#111111" stroke-width="1.15"/>
<text x="809.35" y="421.9" font-size="10.4" fill="#111111" textLength="23" lengthAdjust="spacingAndGlyphs" text-anchor="middle" font-weight="bold" font-family='"Liberation Sans", sans-serif'>10/16A</text>
<text x="809.5" y="435.7" font-size="9.5" fill="#7ae5ef" textLength="22.3" lengthAdjust="spacingAndGlyphs" text-anchor="middle" font-family='"Liberation Sans", sans-serif' stroke="#7ae5ef" stroke-width="0.3">XS167</text>
<text x="831.8" y="396.9" font-size="9.5" fill="#7ae5ef" textLength="32" lengthAdjust="spacingAndGlyphs" font-family='"Liberation Sans", sans-serif' stroke="#7ae5ef" stroke-width="0.3">BOX164</text>
<text x="831.8" y="408.5" font-size="9.6" fill="#111111" textLength="57" lengthAdjust="spacingAndGlyphs" font-family='"Liberation Sans", sans-serif' stroke="#111111" stroke-width="0.55">Prese Servizio 2</text>
<text x="831.8" y="427.3" font-size="9.6" fill="#66e02c" textLength="21.5" lengthAdjust="spacingAndGlyphs" font-weight="bold" font-family='"Liberation Sans", sans-serif'>h = 30</text>
<rect x="836.65" y="390.85" width="36.8" height="36.2" fill="none" stroke="#f3f345" stroke-width="1.7"/>
<rect x="838" y="392.2" width="34.1" height="33.5" fill="none" stroke="#2a2a2a" stroke-width="1.1"/>
<circle cx="846.3" cy="408.5" r="4.1" fill="none" stroke="#111111" stroke-width="1.1"/>
<path d="M849.100 404 l2.500 -4.700 l2.800 1.400 M843.500 404 l-2.500 -4.500 l-2.300 1 M843.500 413 l-2.800 4.700 l-2 -0.800 M849.100 413 l2.800 5 l2.300 -1.400" fill="none" stroke="#111111" stroke-width="1.1"/>
<circle cx="864.4" cy="401.5" r="3" fill="none" stroke="#111111" stroke-width="1"/>
<path d="M868.600 401.500 h2 M860.200 401.500 h-2 M867.400 404.500 l1.400 1.400 M861.400 404.500 l-1.400 1.400 M864.400 405.700 v2 M867.400 398.500 l1.400 -1.400 M861.400 398.500 l-1.400 -1.400" fill="none" stroke="#111111" stroke-width="0.9"/>
<rect x="862.6" y="394.7" width="3.6" height="2.6" fill="none" stroke="#111111" stroke-width="0.9"/>
<path d="M858.200 419.500 h3.200 v-2.100 h3.200 v-2.100 h3.200 v-2.100 h3.300" fill="none" stroke="#111111" stroke-width="1"/>
<text x="855" y="435.7" font-size="9.5" fill="#7ae5ef" textLength="24.2" lengthAdjust="spacingAndGlyphs" text-anchor="middle" font-family='"Liberation Sans", sans-serif' stroke="#7ae5ef" stroke-width="0.3">SS242</text>
<text x="877.6" y="396.9" font-size="9.5" fill="#7ae5ef" textLength="33" lengthAdjust="spacingAndGlyphs" font-family='"Liberation Sans", sans-serif' stroke="#7ae5ef" stroke-width="0.3">BOX144</text>
<text x="877.6" y="408.5" font-size="9.6" fill="#111111" textLength="57.8" lengthAdjust="spacingAndGlyphs" font-family='"Liberation Sans", sans-serif' stroke="#111111" stroke-width="0.55">Accensione Luce</text>
<text x="877.6" y="427.3" font-size="9.6" fill="#66e02c" textLength="24.4" lengthAdjust="spacingAndGlyphs" font-weight="bold" font-family='"Liberation Sans", sans-serif'>h = 100</text>
<rect x="762" y="604.6" width="34.5" height="34.2" fill="none" stroke="#111111" stroke-width="1"/>
<path d="M773.5 616.2 l11.400 11.400 M784.9 616.2 l-11.400 11.400" fill="none" stroke="#111111" stroke-width="1.2"/>
<text x="779.2" y="603.2" font-size="7.8" fill="#1c1cd8" textLength="21" lengthAdjust="spacingAndGlyphs" text-anchor="middle" font-weight="bold" font-family='"Liberation Sans", sans-serif'>h = 270</text>
<text x="779.2" y="649.2" font-size="10.6" fill="#7ae5ef" textLength="21.5" lengthAdjust="spacingAndGlyphs" text-anchor="middle" font-family='"Liberation Sans", sans-serif' stroke="#7ae5ef" stroke-width="0.3">EL176</text>
<rect x="942.25" y="496.55" width="37.8" height="38" fill="none" stroke="#f3f345" stroke-width="1.7"/>
<rect x="943.6" y="497.9" width="35.1" height="35.3" fill="none" stroke="#2a2a2a" stroke-width="1.1"/>
<path d="M961.15 505.1 v8.800 M956.35 513.9 h9.600 M956.85 518.1 c0 -4.800 8.600 -4.800 8.600 0" fill="none" stroke="#111111" stroke-width="1.15"/>
<text x="961.15" y="527.7" font-size="10.4" fill="#111111" textLength="23" lengthAdjust="spacingAndGlyphs" text-anchor="middle" font-weight="bold" font-family='"Liberation Sans", sans-serif'>10/16A</text>
<text x="961.3" y="542.2" font-size="9.5" fill="#7ae5ef" textLength="22.3" lengthAdjust="spacingAndGlyphs" text-anchor="middle" font-family='"Liberation Sans", sans-serif' stroke="#7ae5ef" stroke-width="0.3">XS173</text>
<text x="983.6" y="503.4" font-size="9.5" fill="#7ae5ef" textLength="32.6" lengthAdjust="spacingAndGlyphs" font-family='"Liberation Sans", sans-serif' stroke="#7ae5ef" stroke-width="0.3">BOX170</text>
<text x="983.6" y="515" font-size="9.6" fill="#111111" textLength="58.6" lengthAdjust="spacingAndGlyphs" font-family='"Liberation Sans", sans-serif' stroke="#111111" stroke-width="0.55">Prese Servizio 2</text>
<text x="983.6" y="533.8" font-size="9.6" fill="#66e02c" textLength="21.4" lengthAdjust="spacingAndGlyphs" font-weight="bold" font-family='"Liberation Sans", sans-serif'>h = 30</text>
<rect x="473.85" y="784.85" width="138.1" height="36.3" fill="none" stroke="#f3f345" stroke-width="1.7"/>
<rect x="475.2" y="786.2" width="135.4" height="33.6" fill="none" stroke="#2a2a2a" stroke-width="1.1"/>
<line x1="508.2" y1="786.2" x2="508.2" y2="819.8" stroke="#111111" stroke-width="1.1"/>
<line x1="542.2" y1="786.2" x2="542.2" y2="819.8" stroke="#111111" stroke-width="1.1"/>
<line x1="576.3" y1="786.2" x2="576.3" y2="819.8" stroke="#111111" stroke-width="1.1"/>
<circle cx="484.4" cy="803.2" r="4.1" fill="none" stroke="#111111" stroke-width="1.1"/>
<path d="M487.2 798.7 l2.500 -4.700 l2.800 1.400 M481.6 798.7 l-2.500 -4.500 l-2.800 1.200 M481.6 807.7 l-2.800 4.700 l-2 -0.800 M487.2 807.7 l2.800 5 l2.300 -1.400" fill="none" stroke="#111111" stroke-width="1.1"/>
<circle cx="499.2" cy="809.6" r="4.6" fill="none" stroke="#111111" stroke-width="1.1"/>
<path d="M504.8 809.6 L507 809.6 M503.16 813.56 L504.72 815.12 M499.2 815.2 L499.2 817.4 M495.24 813.56 L493.68 815.12 M493.6 809.6 L491.4 809.6 M495.24 805.64 L493.68 804.08 M503.16 805.64 L504.72 804.08" fill="none" stroke="#111111" stroke-width="1"/>
<rect x="497" y="802" width="4.4" height="3" fill="none" stroke="#111111" stroke-width="1"/>
<circle cx="517.4" cy="803.2" r="4.1" fill="none" stroke="#111111" stroke-width="1.1"/>
<path d="M520.2 798.7 l2.500 -4.700 l2.800 1.400 M514.6 798.7 l-2.500 -4.500 l-2.800 1.200 M514.6 807.7 l-2.800 4.700 l-2 -0.800 M520.2 807.7 l2.800 5 l2.300 -1.400" fill="none" stroke="#111111" stroke-width="1.1"/>
<circle cx="532.2" cy="809.6" r="4.6" fill="none" stroke="#111111" stroke-width="1.1"/>
<path d="M537.8 809.6 L540 809.6 M536.16 813.56 L537.72 815.12 M532.2 815.2 L532.2 817.4 M528.24 813.56 L526.68 815.12 M526.6 809.6 L524.4 809.6 M528.24 805.64 L526.68 804.08 M536.16 805.64 L537.72 804.08" fill="none" stroke="#111111" stroke-width="1"/>
<rect x="530" y="802" width="4.4" height="3" fill="none" stroke="#111111" stroke-width="1"/>
<path d="M559.25 793.4 v8.800 M554.45 802.2 h9.600 M554.95 806.4 c0 -4.800 8.600 -4.800 8.600 0" fill="none" stroke="#111111" stroke-width="1.15"/>
<text x="559.25" y="816" font-size="10.4" fill="#111111" textLength="23" lengthAdjust="spacingAndGlyphs" text-anchor="middle" font-weight="bold" font-family='"Liberation Sans", sans-serif'>10/16A</text>
<path d="M593.45 793.4 v8.800 M588.65 802.2 h9.600 M589.15 806.4 c0 -4.800 8.600 -4.800 8.600 0" fill="none" stroke="#111111" stroke-width="1.15"/>
<text x="593.45" y="816" font-size="10.4" fill="#111111" textLength="23" lengthAdjust="spacingAndGlyphs" text-anchor="middle" font-weight="bold" font-family='"Liberation Sans", sans-serif'>10/16A</text>
<text x="492.5" y="829.7" font-size="9.5" fill="#7ae5ef" textLength="24" lengthAdjust="spacingAndGlyphs" text-anchor="middle" font-family='"Liberation Sans", sans-serif' stroke="#7ae5ef" stroke-width="0.3">SS245</text>
<text x="525" y="829.7" font-size="9.5" fill="#7ae5ef" textLength="24" lengthAdjust="spacingAndGlyphs" text-anchor="middle" font-family='"Liberation Sans", sans-serif' stroke="#7ae5ef" stroke-width="0.3">SS246</text>
<text x="559.2" y="829.7" font-size="9.5" fill="#7ae5ef" textLength="22" lengthAdjust="spacingAndGlyphs" text-anchor="middle" font-family='"Liberation Sans", sans-serif' stroke="#7ae5ef" stroke-width="0.3">XS162</text>
<text x="593.3" y="829.7" font-size="9.5" fill="#7ae5ef" textLength="22.3" lengthAdjust="spacingAndGlyphs" text-anchor="middle" font-family='"Liberation Sans", sans-serif' stroke="#7ae5ef" stroke-width="0.3">XS163</text>
<text x="626" y="790.9" font-size="9.5" fill="#7ae5ef" textLength="32.7" lengthAdjust="spacingAndGlyphs" font-family='"Liberation Sans", sans-serif' stroke="#7ae5ef" stroke-width="0.3">BOX157</text>
<text x="626" y="802.5" font-size="9.6" fill="#111111" textLength="91.5" lengthAdjust="spacingAndGlyphs" font-family='"Liberation Sans", sans-serif' stroke="#111111" stroke-width="0.55">Accensione Luce 2 (Letto)</text>
<text x="626" y="821.3" font-size="9.6" fill="#66e02c" textLength="22" lengthAdjust="spacingAndGlyphs" font-weight="bold" font-family='"Liberation Sans", sans-serif'>h = 50</text>
<rect x="1108.95" y="390.65" width="38.1" height="37" fill="none" stroke="#f3f345" stroke-width="1.7"/>
<rect x="1110.3" y="392" width="35.4" height="34.3" fill="none" stroke="#2a2a2a" stroke-width="1.1"/>
<circle cx="1119.5" cy="409" r="4.1" fill="none" stroke="#111111" stroke-width="1.1"/>
<path d="M1122.3 404.5 l2.500 -4.700 l2.800 1.400 M1116.7 404.5 l-2.500 -4.500 l-2.800 1.200 M1116.7 413.5 l-2.800 4.700 l-2 -0.800 M1122.3 413.5 l2.800 5 l2.300 -1.400" fill="none" stroke="#111111" stroke-width="1.1"/>
<circle cx="1134.3" cy="415.4" r="4.6" fill="none" stroke="#111111" stroke-width="1.1"/>
<path d="M1139.9 415.4 L1142.1 415.4 M1138.26 419.36 L1139.82 420.92 M1134.3 421 L1134.3 423.2 M1130.34 419.36 L1128.78 420.92 M1128.7 415.4 L1126.5 415.4 M1130.34 411.44 L1128.78 409.88 M1138.26 411.44 L1139.82 409.88" fill="none" stroke="#111111" stroke-width="1"/>
<rect x="1132.1" y="407.8" width="4.4" height="3" fill="none" stroke="#111111" stroke-width="1"/>
<text x="1128" y="435.7" font-size="9.5" fill="#7ae5ef" textLength="23.8" lengthAdjust="spacingAndGlyphs" text-anchor="middle" font-family='"Liberation Sans", sans-serif' stroke="#7ae5ef" stroke-width="0.3">SS327</text>
<text x="1150.4" y="396.9" font-size="9.5" fill="#7ae5ef" textLength="34" lengthAdjust="spacingAndGlyphs" font-family='"Liberation Sans", sans-serif' stroke="#7ae5ef" stroke-width="0.3">BOX323</text>
<text x="1150.4" y="408.5" font-size="9.6" fill="#111111" textLength="57.6" lengthAdjust="spacingAndGlyphs" font-family='"Liberation Sans", sans-serif' stroke="#111111" stroke-width="0.55">Accensione Luce</text>
<text x="1150.4" y="427.3" font-size="9.6" fill="#66e02c" textLength="24.2" lengthAdjust="spacingAndGlyphs" font-weight="bold" font-family='"Liberation Sans", sans-serif'>h = 100</text>
<rect x="1095.4" y="589.2" width="34.5" height="34.2" fill="none" stroke="#111111" stroke-width="1"/>
<path d="M1106.9 600.8 l11.400 11.400 M1118.3 600.8 l-11.400 11.400" fill="none" stroke="#111111" stroke-width="1.2"/>
<text x="1112.6" y="587.8" font-size="7.8" fill="#1c1cd8" textLength="21" lengthAdjust="spacingAndGlyphs" text-anchor="middle" font-weight="bold" font-family='"Liberation Sans", sans-serif'>h = 270</text>
<text x="1112.6" y="633.8" font-size="10.6" fill="#7ae5ef" textLength="21.5" lengthAdjust="spacingAndGlyphs" text-anchor="middle" font-family='"Liberation Sans", sans-serif' stroke="#7ae5ef" stroke-width="0.3">EL351</text>
<rect x="1154.65" y="573.35" width="71.7" height="36" fill="none" stroke="#f3f345" stroke-width="1.7"/>
<rect x="1156" y="574.7" width="69" height="33.3" fill="none" stroke="#2a2a2a" stroke-width="1.1"/>
<line x1="1190.5" y1="574.7" x2="1190.5" y2="608" stroke="#111111" stroke-width="1.1"/>
<path d="M1173.25 581.9 v8.800 M1168.45 590.7 h9.600 M1168.95 594.9 c0 -4.800 8.600 -4.800 8.600 0" fill="none" stroke="#111111" stroke-width="1.15"/>
<text x="1173.25" y="604.5" font-size="10.4" fill="#111111" textLength="12" lengthAdjust="spacingAndGlyphs" text-anchor="middle" font-weight="bold" font-family='"Liberation Sans", sans-serif'>16A</text>
<rect x="1191.8" y="575.2" width="32.5" height="32.2" fill="none" stroke="#111111" stroke-width="2"/>
<text x="1195" y="584.5" font-size="5.5" fill="#111111" textLength="7" lengthAdjust="spacingAndGlyphs" font-weight="bold" font-family='"Liberation Sans", sans-serif'>2kV</text>
<text x="1195" y="603.5" font-size="5.5" fill="#111111" textLength="7.5" lengthAdjust="spacingAndGlyphs" font-weight="bold" font-family='"Liberation Sans", sans-serif'>16A</text>
<path d="M1209 581 v8 M1206 593.500 a4 4 0 1 1 6 0 M1205 597 h8" fill="none" stroke="#111111" stroke-width="1"/>
<text x="1174" y="617.7" font-size="9.5" fill="#7ae5ef" textLength="23.8" lengthAdjust="spacingAndGlyphs" text-anchor="middle" font-family='"Liberation Sans", sans-serif' stroke="#7ae5ef" stroke-width="0.3">XS332</text>
<text x="1208" y="617.7" font-size="9.5" fill="#7ae5ef" textLength="23.8" lengthAdjust="spacingAndGlyphs" text-anchor="middle" font-family='"Liberation Sans", sans-serif' stroke="#7ae5ef" stroke-width="0.3">XS333</text>
<text x="1233" y="578.9" font-size="9.5" fill="#7ae5ef" textLength="34" lengthAdjust="spacingAndGlyphs" font-family='"Liberation Sans", sans-serif' stroke="#7ae5ef" stroke-width="0.3">BOX329</text>
<text x="1233" y="590.5" font-size="9.6" fill="#111111" textLength="54" lengthAdjust="spacingAndGlyphs" font-family='"Liberation Sans", sans-serif' stroke="#111111" stroke-width="0.55">Presa Specchio</text>
<text x="1233" y="609.3" font-size="9.6" fill="#66e02c" textLength="24.5" lengthAdjust="spacingAndGlyphs" font-weight="bold" font-family='"Liberation Sans", sans-serif'>h = 100</text>
<rect x="1186.5" y="649.3" width="34.5" height="34.2" fill="none" stroke="#111111" stroke-width="1"/>
<path d="M1198 660.9 l11.400 11.400 M1209.4 660.9 l-11.400 11.400" fill="none" stroke="#111111" stroke-width="1.2"/>
<text x="1203.7" y="647.9" font-size="7.8" fill="#1c1cd8" textLength="21" lengthAdjust="spacingAndGlyphs" text-anchor="middle" font-weight="bold" font-family='"Liberation Sans", sans-serif'>h = 270</text>
<text x="1203.7" y="693.9" font-size="10.6" fill="#7ae5ef" textLength="21.5" lengthAdjust="spacingAndGlyphs" text-anchor="middle" font-family='"Liberation Sans", sans-serif' stroke="#7ae5ef" stroke-width="0.3">EL352</text>
<rect x="1185.15" y="709.55" width="37.3" height="37" fill="none" stroke="#f3f345" stroke-width="1.7"/>
<rect x="1186.5" y="710.9" width="34.6" height="34.3" fill="none" stroke="#2a2a2a" stroke-width="1.1"/>
<circle cx="1195.7" cy="727.9" r="4.1" fill="none" stroke="#111111" stroke-width="1.1"/>
<path d="M1198.5 723.4 l2.500 -4.700 l2.800 1.400 M1192.9 723.4 l-2.500 -4.500 l-2.800 1.200 M1192.9 732.4 l-2.800 4.700 l-2 -0.800 M1198.5 732.4 l2.800 5 l2.300 -1.400" fill="none" stroke="#111111" stroke-width="1.1"/>
<circle cx="1210.5" cy="734.3" r="4.6" fill="none" stroke="#111111" stroke-width="1.1"/>
<path d="M1216.1 734.3 L1218.3 734.3 M1214.46 738.26 L1216.02 739.82 M1210.5 739.9 L1210.5 742.1 M1206.54 738.26 L1204.98 739.82 M1204.9 734.3 L1202.7 734.3 M1206.54 730.34 L1204.98 728.78 M1214.46 730.34 L1216.02 728.78" fill="none" stroke="#111111" stroke-width="1"/>
<rect x="1208.3" y="726.7" width="4.4" height="3" fill="none" stroke="#111111" stroke-width="1"/>
<text x="1203.5" y="754.7" font-size="9.5" fill="#7ae5ef" textLength="23.8" lengthAdjust="spacingAndGlyphs" text-anchor="middle" font-family='"Liberation Sans", sans-serif' stroke="#7ae5ef" stroke-width="0.3">SS342</text>
<text x="1226.5" y="715.9" font-size="9.5" fill="#7ae5ef" textLength="33.5" lengthAdjust="spacingAndGlyphs" font-family='"Liberation Sans", sans-serif' stroke="#7ae5ef" stroke-width="0.3">BOX339</text>
<text x="1226.5" y="727.5" font-size="9.6" fill="#111111" textLength="90.5" lengthAdjust="spacingAndGlyphs" font-family='"Liberation Sans", sans-serif' stroke="#111111" stroke-width="0.55">Accensione Luce Specchio</text>
<text x="1226.5" y="746.3" font-size="9.6" fill="#66e02c" textLength="24.5" lengthAdjust="spacingAndGlyphs" font-weight="bold" font-family='"Liberation Sans", sans-serif'>h = 100</text>
<rect x="1018.55" y="784.85" width="37.4" height="37" fill="none" stroke="#f3f345" stroke-width="1.7"/>
<rect x="1019.9" y="786.2" width="34.7" height="34.3" fill="none" stroke="#2a2a2a" stroke-width="1.1"/>
<path d="M1037.25 793.4 v9 M1028.45 806.6 h3.600 q0.700 -4.100 2.100 -4.400 h6.200 q1.400 0.300 2.100 4.400 h3.600" fill="none" stroke="#111111" stroke-width="1.1"/>
<text x="1037.25" y="816" font-size="10.4" fill="#111111" textLength="27.3" lengthAdjust="spacingAndGlyphs" text-anchor="middle" font-weight="bold" font-family='"Liberation Sans", sans-serif'>SCHUKO</text>
<text x="1037" y="830.2" font-size="9.5" fill="#7ae5ef" textLength="23.6" lengthAdjust="spacingAndGlyphs" text-anchor="middle" font-family='"Liberation Sans", sans-serif' stroke="#7ae5ef" stroke-width="0.3">XS337</text>
<text x="1059.5" y="790.9" font-size="9.5" fill="#7ae5ef" textLength="34.7" lengthAdjust="spacingAndGlyphs" font-family='"Liberation Sans", sans-serif' stroke="#7ae5ef" stroke-width="0.3">BOX334</text>
<text x="1059.5" y="802.5" font-size="9.6" fill="#111111" textLength="56.5" lengthAdjust="spacingAndGlyphs" font-family='"Liberation Sans", sans-serif' stroke="#111111" stroke-width="0.55">Presa Lavatrice</text>
<text x="1059.5" y="821.3" font-size="9.6" fill="#66e02c" textLength="22" lengthAdjust="spacingAndGlyphs" font-weight="bold" font-family='"Liberation Sans", sans-serif'>h = 50</text>
<rect x="1337.25" y="391.05" width="36.8" height="36.5" fill="none" stroke="#f3f345" stroke-width="1.7"/>
<rect x="1338.6" y="392.4" width="34.1" height="33.8" fill="none" stroke="#2a2a2a" stroke-width="1.1"/>
<circle cx="1347.8" cy="409.4" r="4.1" fill="none" stroke="#111111" stroke-width="1.1"/>
<path d="M1350.6 404.9 l2.500 -4.700 l2.800 1.400 M1345 404.9 l-2.500 -4.500 l-2.800 1.200 M1345 413.9 l-2.800 4.700 l-2 -0.800 M1350.6 413.9 l2.800 5 l2.300 -1.400" fill="none" stroke="#111111" stroke-width="1.1"/>
<circle cx="1362.6" cy="415.8" r="4.6" fill="none" stroke="#111111" stroke-width="1.1"/>
<path d="M1368.2 415.8 L1370.4 415.8 M1366.56 419.76 L1368.12 421.32 M1362.6 421.4 L1362.6 423.6 M1358.64 419.76 L1357.08 421.32 M1357 415.8 L1354.8 415.8 M1358.64 411.84 L1357.08 410.28 M1366.56 411.84 L1368.12 410.28" fill="none" stroke="#111111" stroke-width="1"/>
<rect x="1360.4" y="408.2" width="4.4" height="3" fill="none" stroke="#111111" stroke-width="1"/>
<text x="1355.5" y="435.7" font-size="9.5" fill="#7ae5ef" textLength="21.6" lengthAdjust="spacingAndGlyphs" text-anchor="middle" font-family='"Liberation Sans", sans-serif' stroke="#7ae5ef" stroke-width="0.3">SS519</text>
<text x="1378.3" y="396.9" font-size="9.5" fill="#7ae5ef" textLength="32.4" lengthAdjust="spacingAndGlyphs" font-family='"Liberation Sans", sans-serif' stroke="#7ae5ef" stroke-width="0.3">BOX515</text>
<text x="1378.3" y="408.5" font-size="9.6" fill="#111111" textLength="57.7" lengthAdjust="spacingAndGlyphs" font-family='"Liberation Sans", sans-serif' stroke="#111111" stroke-width="0.55">Accensione Luce</text>
<text x="1378.3" y="427.3" font-size="9.6" fill="#66e02c" textLength="24.4" lengthAdjust="spacingAndGlyphs" font-weight="bold" font-family='"Liberation Sans", sans-serif'>h = 100</text>
<rect x="1266.95" y="443.55" width="139.8" height="37" fill="none" stroke="#f3f345" stroke-width="1.7"/>
<rect x="1268.3" y="444.9" width="137.1" height="34.3" fill="none" stroke="#2a2a2a" stroke-width="1.1"/>
<line x1="1302.5" y1="444.9" x2="1302.5" y2="479.2" stroke="#111111" stroke-width="1.1"/>
<line x1="1336.4" y1="444.9" x2="1336.4" y2="479.2" stroke="#111111" stroke-width="1.1"/>
<line x1="1370.6" y1="444.9" x2="1370.6" y2="479.2" stroke="#111111" stroke-width="1.1"/>
<path d="M1285.4 452.1 v8.800 M1280.6 460.9 h9.600 M1281.1 465.1 c0 -4.800 8.600 -4.800 8.600 0" fill="none" stroke="#111111" stroke-width="1.15"/>
<text x="1285.4" y="474.7" font-size="10.4" fill="#111111" textLength="23" lengthAdjust="spacingAndGlyphs" text-anchor="middle" font-weight="bold" font-family='"Liberation Sans", sans-serif'>10/16A</text>
<path d="M1319.45 452.1 v8.800 M1314.65 460.9 h9.600 M1315.15 465.1 c0 -4.800 8.600 -4.800 8.600 0" fill="none" stroke="#111111" stroke-width="1.15"/>
<text x="1319.45" y="474.7" font-size="10.4" fill="#111111" textLength="23" lengthAdjust="spacingAndGlyphs" text-anchor="middle" font-weight="bold" font-family='"Liberation Sans", sans-serif'>10/16A</text>
<path d="M1353.5 452.1 v9 M1344.7 465.3 h3.600 q0.700 -4.100 2.100 -4.400 h6.200 q1.400 0.300 2.100 4.400 h3.600" fill="none" stroke="#111111" stroke-width="1.1"/>
<text x="1353.5" y="474.7" font-size="10.4" fill="#111111" textLength="27.3" lengthAdjust="spacingAndGlyphs" text-anchor="middle" font-weight="bold" font-family='"Liberation Sans", sans-serif'>SCHUKO</text>
<path d="M1388 452.1 v9 M1379.2 465.3 h3.600 q0.700 -4.100 2.100 -4.400 h6.200 q1.400 0.300 2.100 4.400 h3.600" fill="none" stroke="#111111" stroke-width="1.1"/>
<text x="1388" y="474.7" font-size="10.4" fill="#111111" textLength="27.3" lengthAdjust="spacingAndGlyphs" text-anchor="middle" font-weight="bold" font-family='"Liberation Sans", sans-serif'>SCHUKO</text>
<text x="1285.8" y="488.5" font-size="9.5" fill="#7ae5ef" textLength="22.2" lengthAdjust="spacingAndGlyphs" text-anchor="middle" font-family='"Liberation Sans", sans-serif' stroke="#7ae5ef" stroke-width="0.3">XS130</text>
<text x="1320" y="488.5" font-size="9.5" fill="#7ae5ef" textLength="22.2" lengthAdjust="spacingAndGlyphs" text-anchor="middle" font-family='"Liberation Sans", sans-serif' stroke="#7ae5ef" stroke-width="0.3">XS131</text>
<text x="1353.7" y="488.5" font-size="9.5" fill="#7ae5ef" textLength="22.2" lengthAdjust="spacingAndGlyphs" text-anchor="middle" font-family='"Liberation Sans", sans-serif' stroke="#7ae5ef" stroke-width="0.3">XS132</text>
<text x="1387.8" y="488.5" font-size="9.5" fill="#7ae5ef" textLength="22.2" lengthAdjust="spacingAndGlyphs" text-anchor="middle" font-family='"Liberation Sans", sans-serif' stroke="#7ae5ef" stroke-width="0.3">XS133</text>
<text x="1420" y="449.9" font-size="9.5" fill="#7ae5ef" textLength="33" lengthAdjust="spacingAndGlyphs" font-family='"Liberation Sans", sans-serif' stroke="#7ae5ef" stroke-width="0.3">BOX127</text>
<text x="1420" y="461.5" font-size="9.6" fill="#111111" textLength="58.7" lengthAdjust="spacingAndGlyphs" font-family='"Liberation Sans", sans-serif' stroke="#111111" stroke-width="0.55">Prese Servizio 3</text>
<text x="1420" y="480.3" font-size="9.6" fill="#66e02c" textLength="24.3" lengthAdjust="spacingAndGlyphs" font-weight="bold" font-family='"Liberation Sans", sans-serif'>h = 110</text>
<rect x="1595.15" y="406.05" width="70.5" height="36.8" fill="none" stroke="#f3f345" stroke-width="1.7"/>
<rect x="1596.5" y="407.4" width="67.8" height="34.1" fill="none" stroke="#2a2a2a" stroke-width="1.1"/>
<line x1="1630.2" y1="407.4" x2="1630.2" y2="441.5" stroke="#111111" stroke-width="1.1"/>
<path d="M1613.35 414.6 v8.800 M1608.55 423.4 h9.600 M1609.05 427.6 c0 -4.800 8.600 -4.800 8.600 0" fill="none" stroke="#111111" stroke-width="1.15"/>
<text x="1613.35" y="437.2" font-size="10.4" fill="#111111" textLength="23" lengthAdjust="spacingAndGlyphs" text-anchor="middle" font-weight="bold" font-family='"Liberation Sans", sans-serif'>10/16A</text>
<path d="M1647.25 414.6 v9 M1638.45 427.8 h3.600 q0.700 -4.100 2.100 -4.400 h6.200 q1.400 0.300 2.100 4.400 h3.600" fill="none" stroke="#111111" stroke-width="1.1"/>
<text x="1647.25" y="437.2" font-size="10.4" fill="#111111" textLength="27.3" lengthAdjust="spacingAndGlyphs" text-anchor="middle" font-weight="bold" font-family='"Liberation Sans", sans-serif'>SCHUKO</text>
<text x="1613.2" y="450.7" font-size="9.5" fill="#7ae5ef" textLength="22.5" lengthAdjust="spacingAndGlyphs" text-anchor="middle" font-family='"Liberation Sans", sans-serif' stroke="#7ae5ef" stroke-width="0.3">XS120</text>
<text x="1647.5" y="450.7" font-size="9.5" fill="#7ae5ef" textLength="21.8" lengthAdjust="spacingAndGlyphs" text-anchor="middle" font-family='"Liberation Sans", sans-serif' stroke="#7ae5ef" stroke-width="0.3">XS121</text>
<text x="1673.3" y="412.4" font-size="9.5" fill="#7ae5ef" textLength="31" lengthAdjust="spacingAndGlyphs" font-family='"Liberation Sans", sans-serif' stroke="#7ae5ef" stroke-width="0.3">BOX117</text>
<text x="1673.3" y="424" font-size="9.6" fill="#111111" textLength="57.4" lengthAdjust="spacingAndGlyphs" font-family='"Liberation Sans", sans-serif' stroke="#111111" stroke-width="0.55">Prese Servizio 1</text>
<text x="1673.3" y="442.8" font-size="9.6" fill="#66e02c" textLength="21" lengthAdjust="spacingAndGlyphs" font-weight="bold" font-family='"Liberation Sans", sans-serif'>h = 30</text>
<rect x="1716.45" y="361.35" width="36.7" height="35.4" fill="none" stroke="#f3f345" stroke-width="1.7"/>
<rect x="1717.8" y="362.7" width="34" height="32.7" fill="none" stroke="#2a2a2a" stroke-width="1.1"/>
<path d="M1734.8 369.9 v8.800 M1730 378.7 h9.600 M1730.5 382.9 c0 -4.800 8.600 -4.800 8.600 0" fill="none" stroke="#111111" stroke-width="1.15"/>
<text x="1734.8" y="392.5" font-size="10.4" fill="#111111" textLength="23" lengthAdjust="spacingAndGlyphs" text-anchor="middle" font-weight="bold" font-family='"Liberation Sans", sans-serif'>10/16A</text>
<text x="1723" y="406.5" font-size="10" fill="#7ae5ef" textLength="22.5" lengthAdjust="spacingAndGlyphs" font-family='"Liberation Sans", sans-serif'>XS118</text>
<rect x="1716.45" y="512.05" width="36.7" height="36.7" fill="none" stroke="#f3f345" stroke-width="1.7"/>
<rect x="1717.8" y="513.4" width="34" height="34" fill="none" stroke="#2a2a2a" stroke-width="1.1"/>
<circle cx="1727" cy="530.4" r="4.1" fill="none" stroke="#111111" stroke-width="1.1"/>
<path d="M1729.8 525.9 l2.500 -4.700 l2.800 1.400 M1724.2 525.9 l-2.500 -4.500 l-2.800 1.200 M1724.2 534.9 l-2.800 4.700 l-2 -0.800 M1729.8 534.9 l2.800 5 l2.300 -1.400" fill="none" stroke="#111111" stroke-width="1.1"/>
<circle cx="1741.8" cy="536.8" r="4.6" fill="none" stroke="#111111" stroke-width="1.1"/>
<path d="M1747.4 536.8 L1749.6 536.8 M1745.76 540.76 L1747.32 542.32 M1741.8 542.4 L1741.8 544.6 M1737.84 540.76 L1736.28 542.32 M1736.2 536.8 L1734 536.8 M1737.84 532.84 L1736.28 531.28 M1745.76 532.84 L1747.32 531.28" fill="none" stroke="#111111" stroke-width="1"/>
<rect x="1739.6" y="529.2" width="4.4" height="3" fill="none" stroke="#111111" stroke-width="1"/>
<text x="1722" y="558" font-size="10" fill="#7ae5ef" textLength="24" lengthAdjust="spacingAndGlyphs" font-family='"Liberation Sans", sans-serif'>SS122</text>
<rect x="1267.95" y="603.35" width="70.3" height="36.8" fill="none" stroke="#f3f345" stroke-width="1.7"/>
<rect x="1269.3" y="604.7" width="67.6" height="34.1" fill="none" stroke="#2a2a2a" stroke-width="1.1"/>
<line x1="1302.6" y1="604.7" x2="1302.6" y2="638.8" stroke="#111111" stroke-width="1.1"/>
<path d="M1285.95 611.9 v8.800 M1281.15 620.7 h9.600 M1281.65 624.9 c0 -4.800 8.600 -4.800 8.600 0" fill="none" stroke="#111111" stroke-width="1.15"/>
<text x="1285.95" y="634.5" font-size="10.4" fill="#111111" textLength="23" lengthAdjust="spacingAndGlyphs" text-anchor="middle" font-weight="bold" font-family='"Liberation Sans", sans-serif'>10/16A</text>
<path d="M1319.75 611.9 v9 M1310.95 625.1 h3.600 q0.700 -4.100 2.100 -4.400 h6.200 q1.400 0.300 2.100 4.400 h3.600" fill="none" stroke="#111111" stroke-width="1.1"/>
<text x="1319.75" y="634.5" font-size="10.4" fill="#111111" textLength="27.3" lengthAdjust="spacingAndGlyphs" text-anchor="middle" font-weight="bold" font-family='"Liberation Sans", sans-serif'>SCHUKO</text>
<text x="1286" y="647.7" font-size="9.5" fill="#7ae5ef" textLength="23" lengthAdjust="spacingAndGlyphs" text-anchor="middle" font-family='"Liberation Sans", sans-serif' stroke="#7ae5ef" stroke-width="0.3">XS125</text>
<text x="1319.8" y="647.7" font-size="9.5" fill="#7ae5ef" textLength="23" lengthAdjust="spacingAndGlyphs" text-anchor="middle" font-family='"Liberation Sans", sans-serif' stroke="#7ae5ef" stroke-width="0.3">XS126</text>
<text x="1345.6" y="609.4" font-size="9.5" fill="#7ae5ef" textLength="32" lengthAdjust="spacingAndGlyphs" font-family='"Liberation Sans", sans-serif' stroke="#7ae5ef" stroke-width="0.3">BOX122</text>
<text x="1345.6" y="621" font-size="9.6" fill="#111111" textLength="58" lengthAdjust="spacingAndGlyphs" font-family='"Liberation Sans", sans-serif' stroke="#111111" stroke-width="0.55">Prese Servizio 2</text>
<text x="1345.6" y="639.8" font-size="9.6" fill="#66e02c" textLength="21.2" lengthAdjust="spacingAndGlyphs" font-weight="bold" font-family='"Liberation Sans", sans-serif'>h = 30</text>
<rect x="1520.3" y="588.7" width="34.5" height="34.2" fill="none" stroke="#111111" stroke-width="1"/>
<path d="M1531.8 600.3 l11.400 11.400 M1543.2 600.3 l-11.400 11.400" fill="none" stroke="#111111" stroke-width="1.2"/>
<text x="1537.5" y="587.3" font-size="7.8" fill="#1c1cd8" textLength="21" lengthAdjust="spacingAndGlyphs" text-anchor="middle" font-weight="bold" font-family='"Liberation Sans", sans-serif'>h = 270</text>
<text x="1537.5" y="633.3" font-size="10.6" fill="#7ae5ef" textLength="21.5" lengthAdjust="spacingAndGlyphs" text-anchor="middle" font-family='"Liberation Sans", sans-serif' stroke="#7ae5ef" stroke-width="0.3">EL141</text>
<rect x="1493" y="150" width="227" height="165" fill="#ffffff"/>
<path d="M1529 211.200 C1545 180 1585 163 1623 165 C1645 166 1660 172 1668 181 C1640 168 1600 170 1575 187 C1565 195 1560 203 1557 211.200z" fill="#31532c"/>
<path d="M1671.800 170 C1690 178 1702 194 1696.200 211.200 L1686.200 211.200 C1690 198 1686 184 1671.800 170z" fill="#31532c"/>
<path d="M1517.400 258.600 C1522 274 1540 288 1574.900 290.500 C1560 285 1546 274 1538.400 258.600z" fill="#31532c"/>
<path d="M1547.500 297.300 C1560 302 1575 304 1589.500 303.700 C1630 302 1664 286 1677.100 258.600 L1659.800 258.600 C1650 276 1625 292 1598.600 296 C1580 299 1562 299 1547.500 297.300z" fill="#31532c"/>
<text x="1507" y="251.2" font-size="46.5" fill="#7ea535" textLength="196" lengthAdjust="spacingAndGlyphs" font-weight="bold" font-family='"Liberation Sans", sans-serif' stroke="#7ea535" stroke-width="1.2">START</text>
</g>
</svg>
</body></html>
